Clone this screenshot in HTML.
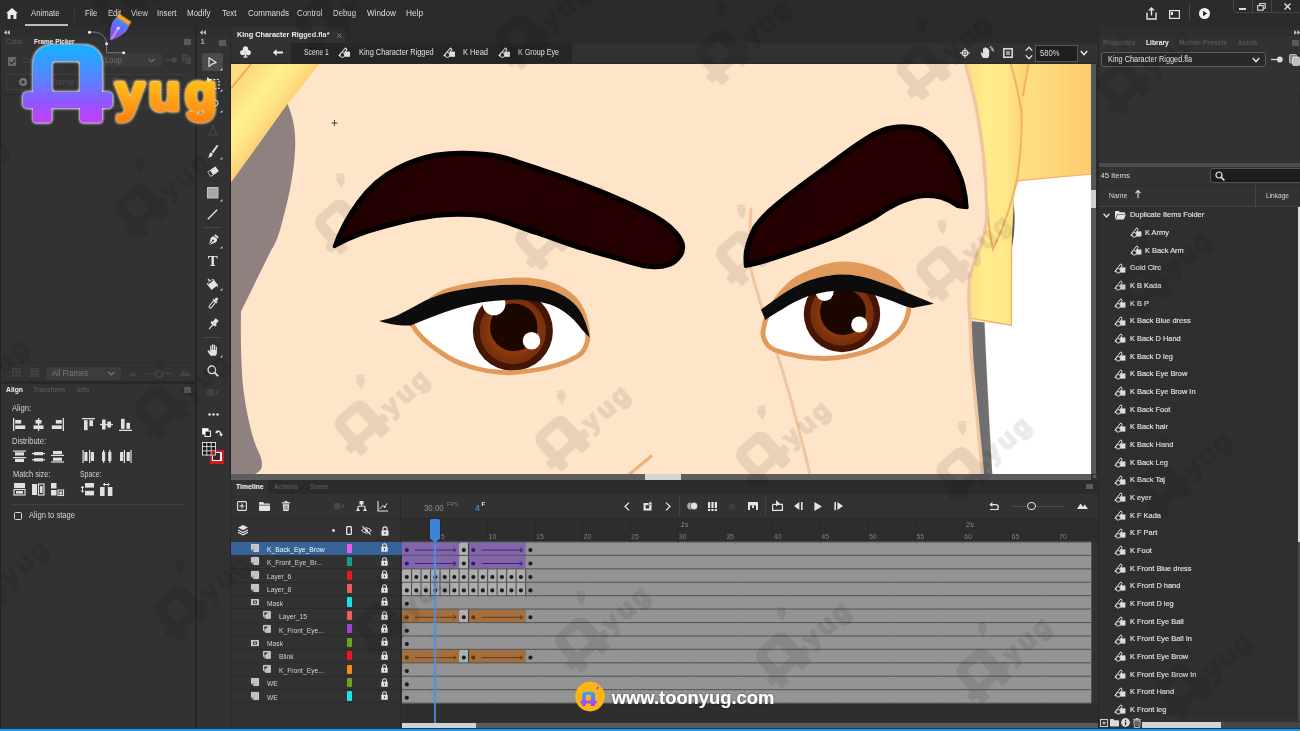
<!DOCTYPE html>
<html>
<head>
<meta charset="utf-8">
<title>Animate - King Character Rigged.fla</title>
<style>
*{box-sizing:border-box;margin:0;padding:0}
html,body{width:1300px;height:731px;overflow:hidden;background:#323232;font-family:"Liberation Sans",sans-serif;color:#d6d6d6;font-size:8px}
#root{position:relative;width:1300px;height:731px;overflow:hidden;background:#323232}
.abs{position:absolute}
.t{position:absolute;white-space:nowrap;line-height:10px;font-size:8px;color:#d4d4d4;transform-origin:0 50%}
.b{font-weight:bold;color:#f2f2f2}
.dim{color:#5e5e5e}
.blur{filter:blur(.35px)}
svg{position:absolute;overflow:visible}
#menubar{left:0;top:0;width:1300px;height:26px;background:#2b2b2b}
#menubar .t{top:8px;font-size:8.3px;color:#dedede}
</style>
</head>
<body>
<div id="root">

<!-- ================= MENUBAR ================= -->
<div id="menubar" class="abs blur">
<svg style="left:6px;top:8px" width="12" height="11" viewBox="0 0 12 11"><path d="M6 0 L12 5.2 L10.4 5.2 L10.4 11 L7.4 11 L7.4 7 L4.6 7 L4.6 11 L1.6 11 L1.6 5.2 L0 5.2 Z" fill="#ececec"/></svg>
<div class="t" style="transform:scaleX(0.940);left:31px">Animate</div>
<div class="abs" style="left:25px;top:24px;width:43px;height:2px;background:#bdbdbd"></div>
<div class="abs" style="left:74px;top:5px;width:1px;height:16px;background:#3a3a3a"></div>
<div class="t" style="transform:scaleX(0.920);left:85px">File</div>
<div class="t" style="transform:scaleX(0.923);left:108px">Edit</div>
<div class="t" style="transform:scaleX(0.942);left:131px">View</div>
<div class="t" style="transform:scaleX(0.939);left:157px">Insert</div>
<div class="t" style="transform:scaleX(0.962);left:187px">Modify</div>
<div class="t" style="transform:scaleX(0.940);left:222px">Text</div>
<div class="t" style="transform:scaleX(0.966);left:248px">Commands</div>
<div class="t" style="transform:scaleX(0.953);left:297px">Control</div>
<div class="t" style="transform:scaleX(0.941);left:333px">Debug</div>
<div class="t" style="transform:scaleX(0.983);left:367px">Window</div>
<div class="t" style="left:406px">Help</div>
<!-- right icons -->
<svg style="left:1146px;top:7px" width="11" height="13" viewBox="0 0 11 13"><path d="M1 5.5 V12 H10 V5.5" fill="none" stroke="#e6e6e6" stroke-width="1.4"/><path d="M5.5 8.5 V1.2 M3 3.4 L5.5 1 L8 3.4" fill="none" stroke="#e6e6e6" stroke-width="1.4"/></svg>
<svg style="left:1169px;top:10px" width="11" height="9" viewBox="0 0 11 9"><rect x=".6" y=".6" width="9.8" height="7.8" fill="none" stroke="#e6e6e6" stroke-width="1.2"/><rect x="1.8" y="2" width="2.2" height="3" fill="#e6e6e6"/></svg>
<div class="abs" style="left:1189px;top:4px;width:1px;height:16px;background:#4a4a4a"></div>
<svg style="left:1199px;top:8px" width="11" height="11" viewBox="0 0 11 11"><circle cx="5.5" cy="5.5" r="5.5" fill="#f2f2f2"/><path d="M4 2.8 L8.2 5.5 L4 8.2 Z" fill="#2b2b2b"/></svg>
<div class="abs" style="left:1233px;top:-2px;width:70px;height:15px;border:1px solid #474747;border-radius:0 0 0 4px"></div>
<div class="abs" style="left:1252px;top:0;width:1px;height:12px;background:#474747"></div>
<div class="abs" style="left:1271px;top:0;width:1px;height:12px;background:#474747"></div>
<div class="abs" style="left:1239px;top:8px;width:7px;height:2px;background:#dcdcdc"></div>
<svg style="left:1257px;top:3px" width="9" height="8" viewBox="0 0 9 8"><rect x="2.6" y=".6" width="5.6" height="4.6" fill="none" stroke="#dcdcdc" stroke-width="1.1"/><rect x=".6" y="2.6" width="5.6" height="4.6" fill="#2b2b2b" stroke="#dcdcdc" stroke-width="1.1"/></svg>
<svg style="left:1284px;top:3px" width="7" height="7" viewBox="0 0 7 7"><path d="M.5 .5 L6.5 6.5 M6.5 .5 L.5 6.5" stroke="#e6e6e6" stroke-width="1.3"/></svg>
</div>

<!-- ================= LEFT PANELS ================= -->
<div class="abs" style="left:0;top:26px;width:196px;height:705px;background:#323232"></div>
<div class="abs" style="left:0;top:26px;width:1px;height:705px;background:#242424"></div>
<div class="abs blur" id="framepicker" style="left:0;top:26px;width:196px;height:356px">
  <div class="abs" style="left:0;top:0;width:196px;height:11px;background:#2e2e2e"></div>
  <svg style="left:4px;top:4px" width="6" height="5" viewBox="0 0 6 5"><path d="M2.6 0 L0 2.5 L2.6 5 Z M5.8 0 L3.2 2.5 L5.8 5 Z" fill="#d0d0d0"/></svg>
  <div class="t dim" style="transform:scaleX(0.863);left:5.5px;top:11px">Color</div>
  <div class="t b" style="transform:scaleX(0.851);left:34px;top:11px;font-size:7.6px">Frame Picker</div>
  <div class="abs" style="left:184px;top:13px;width:7px;height:6px;background:#5a5a5a"></div>
  <!-- row1 -->
  <div class="abs" style="left:7.5px;top:31px;width:8.5px;height:8.5px;background:#6b6b6b;border-radius:1px"></div>
  <svg style="left:8.5px;top:32.5px" width="7" height="6" viewBox="0 0 7 6"><path d="M.8 3 L2.7 4.9 L6.3 .8" stroke="#2e2e2e" stroke-width="1.3" fill="none"/></svg>
  <div class="t" style="left:23px;top:30px;color:#4e4e4e">Create Graphic Sy...</div>
  <div class="abs" style="left:102px;top:27px;width:60px;height:14px;background:#3b3b3b;border-radius:3px"></div>
  <div class="t" style="transform:scaleX(0.898);left:105px;top:29px;color:#727272;font-size:8.5px">Loop</div>
  <svg style="left:148px;top:32px" width="7" height="5" viewBox="0 0 7 5"><path d="M.5 .8 L3.5 4 L6.5 .8" stroke="#727272" stroke-width="1.1" fill="none"/></svg>
  <svg style="left:166px;top:31px" width="11" height="6" viewBox="0 0 11 6"><path d="M0 3 H6" stroke="#4a4a4a" stroke-width="1.2"/><circle cx="8" cy="3" r="2.6" fill="#4a4a4a"/></svg>
  <svg style="left:182px;top:28px" width="10" height="11" viewBox="0 0 10 11"><rect x="0" y="0" width="6.5" height="8" rx="1" fill="#444"/><rect x="3" y="2.5" width="6.5" height="8" rx="1" fill="#444" stroke="#323232" stroke-width=".8"/></svg>
  <!-- row2 -->
  <div class="abs" style="left:6px;top:48px;width:182px;height:16px;border:1px solid #3d3d3d;border-radius:2px"></div>
  <svg style="left:18.5px;top:52px" width="8" height="8" viewBox="0 0 8 8"><circle cx="4" cy="4" r="2.9" fill="none" stroke="#7a7a7a" stroke-width="2.1"/></svg>
  <div class="t" style="left:50px;top:51px;color:#4c4c4c;font-size:8.5px">Frame</div>
  <svg style="left:112px;top:51px" width="8" height="8" viewBox="0 0 8 8"><circle cx="3.2" cy="3.2" r="2.5" fill="none" stroke="#4c4c4c" stroke-width="1"/><path d="M5 5 L7.6 7.6" stroke="#4c4c4c" stroke-width="1.1"/></svg>
  <div class="t" style="left:123px;top:51px;color:#474747;font-size:8.5px">Last frame</div>
  <div class="abs" style="left:0;top:67.5px;width:196px;height:1px;background:#2b2b2b"></div>
  <div class="t" style="left:40px;top:76px;color:#454545">Select a Graphic Symbol to pick frames</div>
  <!-- bottom row -->
  <div class="abs" style="left:0;top:336px;width:196px;height:1px;background:#2c2c2c"></div>
  <svg style="left:11.5px;top:342px" width="9" height="9" viewBox="0 0 9 9"><g fill="#464646"><rect x="0" y="0" width="2.2" height="2.2"/><rect x="3.3" y="0" width="2.2" height="2.2"/><rect x="6.6" y="0" width="2.2" height="2.2"/><rect x="0" y="3.3" width="2.2" height="2.2"/><rect x="3.3" y="3.3" width="2.2" height="2.2"/><rect x="6.6" y="3.3" width="2.2" height="2.2"/><rect x="0" y="6.6" width="2.2" height="2.2"/><rect x="3.3" y="6.6" width="2.2" height="2.2"/><rect x="6.6" y="6.6" width="2.2" height="2.2"/></g></svg>
  <svg style="left:30px;top:342px" width="9" height="9" viewBox="0 0 9 9"><g fill="#464646"><rect x="0" y=".3" width="9" height="1.4"/><rect x="0" y="2.7" width="9" height="1.4"/><rect x="0" y="5.1" width="9" height="1.4"/><rect x="0" y="7.5" width="9" height="1.4"/></g></svg>
  <div class="abs" style="left:46px;top:340.5px;width:75px;height:13px;background:#3c3c3c;border-radius:3px"></div>
  <div class="t" style="transform:scaleX(0.886);left:52px;top:342px;color:#7c7c7c;font-size:8.5px">All Frames</div>
  <svg style="left:107.5px;top:344.5px" width="7" height="5" viewBox="0 0 7 5"><path d="M.5 .8 L3.5 4 L6.5 .8" stroke="#7c7c7c" stroke-width="1.1" fill="none"/></svg>
  <svg style="left:129px;top:345px" width="8" height="5" viewBox="0 0 8 5"><path d="M0 5 L4 1 L8 5 Z" fill="#444"/></svg>
  <div class="abs" style="left:146px;top:347px;width:26px;height:1px;background:#444"></div>
  <div class="abs" style="left:155px;top:343.5px;width:8px;height:8px;border:1.3px solid #505050;border-radius:50%;background:#323232"></div>
  <svg style="left:179px;top:343px" width="12" height="7" viewBox="0 0 12 7"><path d="M0 7 L4 1 L7 5 L9 2.5 L12 7 Z" fill="#444"/></svg>
</div>
<div class="abs" style="left:0;top:381px;width:196px;height:3px;background:#282828"></div>
<div class="abs blur" id="alignpanel" style="left:0;top:0;width:196px;height:731px">
  <div class="t b" style="transform:scaleX(0.890);left:5.5px;top:384.5px;font-size:7.6px">Align</div>
  <div class="t dim" style="transform:scaleX(0.885);left:33px;top:384.5px;font-weight:bold;font-size:7.4px;color:#555">Transform</div>
  <div class="t dim" style="transform:scaleX(0.923);left:76.5px;top:384.5px;font-weight:bold;font-size:7.4px;color:#555">Info</div>
  <div class="abs" style="left:184px;top:386.5px;width:7px;height:6px;background:#5a5a5a"></div>
  <div class="t" style="transform:scaleX(0.928);left:12px;top:403.5px;font-size:8.2px">Align:</div>
  <div class="t" style="transform:scaleX(0.922);left:12px;top:437px;font-size:8.2px">Distribute:</div>
  <div class="t" style="transform:scaleX(0.906);left:12.5px;top:470px;font-size:8.2px">Match size:</div>
  <div class="t" style="transform:scaleX(0.843);left:79.5px;top:470px;font-size:8.2px">Space:</div>
  <svg style="left:13px;top:417.5px" width="13" height="13" viewBox="0 0 13 13"><rect x="0" y="0" width="1.3" height="13" fill="#e0e0e0"/><rect x="2.2" y="2" width="6" height="3.6" fill="#e0e0e0"/><rect x="2.2" y="7.4" width="10" height="3.6" fill="#e0e0e0"/></svg>
<svg style="left:32px;top:417.5px" width="13" height="13" viewBox="0 0 13 13"><rect x="5.9" y="0" width="1.3" height="13" fill="#e0e0e0"/><rect x="3.5" y="2" width="6" height="3.6" fill="#e0e0e0"/><rect x="1.5" y="7.4" width="10" height="3.6" fill="#e0e0e0"/></svg>
<svg style="left:51px;top:417.5px" width="13" height="13" viewBox="0 0 13 13"><rect x="11.7" y="0" width="1.3" height="13" fill="#e0e0e0"/><rect x="4.8" y="2" width="6" height="3.6" fill="#e0e0e0"/><rect x=".8" y="7.4" width="10" height="3.6" fill="#e0e0e0"/></svg>
<svg style="left:81.5px;top:417.5px" width="13" height="13" viewBox="0 0 13 13"><rect x="0" y="0" width="13" height="1.3" fill="#e0e0e0"/><rect x="2" y="2.2" width="3.6" height="10" fill="#e0e0e0"/><rect x="7.4" y="2.2" width="3.6" height="6" fill="#e0e0e0"/></svg>
<svg style="left:100px;top:417.5px" width="13" height="13" viewBox="0 0 13 13"><rect x="0" y="5.9" width="13" height="1.3" fill="#e0e0e0"/><rect x="2" y="1.5" width="3.6" height="10" fill="#e0e0e0"/><rect x="7.4" y="3.5" width="3.6" height="6" fill="#e0e0e0"/></svg>
<svg style="left:118.5px;top:417.5px" width="13" height="13" viewBox="0 0 13 13"><rect x="0" y="11.7" width="13" height="1.3" fill="#e0e0e0"/><rect x="2" y=".8" width="3.6" height="10" fill="#e0e0e0"/><rect x="7.4" y="4.8" width="3.6" height="6" fill="#e0e0e0"/></svg>
<svg style="left:13px;top:450px" width="13" height="13" viewBox="0 0 13 13"><rect x="0" y=".5" width="13" height="1.2" fill="#e0e0e0"/><rect x="2" y="2.3" width="9" height="3.2" fill="#e0e0e0"/><rect x="0" y="7" width="13" height="1.2" fill="#e0e0e0"/><rect x="2" y="8.8" width="9" height="3.2" fill="#e0e0e0"/></svg>
<svg style="left:32px;top:450px" width="13" height="13" viewBox="0 0 13 13"><rect x="0" y="3" width="13" height="1.2" fill="#e0e0e0"/><rect x="2" y="2" width="9" height="3.2" fill="#e0e0e0"/><rect x="0" y="9.2" width="13" height="1.2" fill="#e0e0e0"/><rect x="2" y="8.2" width="9" height="3.2" fill="#e0e0e0"/></svg>
<svg style="left:51px;top:450px" width="13" height="13" viewBox="0 0 13 13"><rect x="0" y="4.8" width="13" height="1.2" fill="#e0e0e0"/><rect x="2" y="1" width="9" height="3.2" fill="#e0e0e0"/><rect x="0" y="11.4" width="13" height="1.2" fill="#e0e0e0"/><rect x="2" y="7.6" width="9" height="3.2" fill="#e0e0e0"/></svg>
<svg style="left:81.5px;top:450px" width="13" height="13" viewBox="0 0 13 13"><rect x=".5" y="0" width="1.2" height="13" fill="#e0e0e0"/><rect x="2.3" y="2" width="3.2" height="9" fill="#e0e0e0"/><rect x="7" y="0" width="1.2" height="13" fill="#e0e0e0"/><rect x="8.8" y="2" width="3.2" height="9" fill="#e0e0e0"/></svg>
<svg style="left:100px;top:450px" width="13" height="13" viewBox="0 0 13 13"><rect x="3" y="0" width="1.2" height="13" fill="#e0e0e0"/><rect x="2" y="2" width="3.2" height="9" fill="#e0e0e0"/><rect x="9.2" y="0" width="1.2" height="13" fill="#e0e0e0"/><rect x="8.2" y="2" width="3.2" height="9" fill="#e0e0e0"/></svg>
<svg style="left:118.5px;top:450px" width="13" height="13" viewBox="0 0 13 13"><rect x="4.8" y="0" width="1.2" height="13" fill="#e0e0e0"/><rect x="1" y="2" width="3.2" height="9" fill="#e0e0e0"/><rect x="11.4" y="0" width="1.2" height="13" fill="#e0e0e0"/><rect x="7.6" y="2" width="3.2" height="9" fill="#e0e0e0"/></svg>
<svg style="left:13px;top:483px" width="13" height="13" viewBox="0 0 13 13"><rect x="1" y="0" width="11" height="5" fill="#e0e0e0"/><rect x="1" y="6.5" width="11" height="5.5" fill="none" stroke="#e0e0e0" stroke-width="1.2"/><rect x="3" y="8" width="7" height="2.6" fill="#e0e0e0"/></svg>
<svg style="left:32px;top:483px" width="13" height="13" viewBox="0 0 13 13"><rect x="0" y="1" width="5" height="11" fill="#e0e0e0"/><rect x="6.5" y="1" width="5.5" height="11" fill="none" stroke="#e0e0e0" stroke-width="1.2"/><rect x="8" y="3" width="2.6" height="7" fill="#e0e0e0"/></svg>
<svg style="left:51px;top:483px" width="13" height="13" viewBox="0 0 13 13"><rect x="0" y="0" width="5.5" height="5.5" fill="#e0e0e0"/><rect x="0" y="7" width="5.5" height="5.5" fill="#e0e0e0"/><rect x="7" y="7" width="5.5" height="5.5" fill="none" stroke="#e0e0e0" stroke-width="1.1"/><rect x="8.4" y="8.6" width="2.8" height="2.8" fill="#e0e0e0"/></svg>
<svg style="left:81px;top:483px" width="13" height="13" viewBox="0 0 13 13"><rect x="4" y="0" width="9" height="4.6" fill="#e0e0e0"/><rect x="4" y="7.8" width="9" height="4.6" fill="#e0e0e0"/><path d="M1.5 3.5 V9 M0 5 L1.5 3.2 L3 5 M0 7.6 L1.5 9.4 L3 7.6" stroke="#e0e0e0" fill="none" stroke-width="1"/></svg>
<svg style="left:100px;top:483px" width="13" height="13" viewBox="0 0 13 13"><rect x="0" y="4" width="4.6" height="9" fill="#e0e0e0"/><rect x="7.8" y="4" width="4.6" height="9" fill="#e0e0e0"/><path d="M3.5 1.5 H9 M5 0 L3.2 1.5 L5 3 M7.6 0 L9.4 1.5 L7.6 3" stroke="#e0e0e0" fill="none" stroke-width="1"/></svg>
  <div class="abs" style="left:12px;top:503.5px;width:172px;height:1px;background:#434343"></div>
  <div class="abs" style="left:13.5px;top:511.5px;width:8.5px;height:8.5px;border:1.2px solid #d8d8d8;border-radius:1.5px"></div>
  <div class="t" style="transform:scaleX(0.927);left:28.5px;top:510.5px;font-size:8.2px">Align to stage</div>
</div>
<div class="abs" style="left:195px;top:26px;width:2px;height:705px;background:#262626"></div>

<!-- ================= TOOLS ================= -->
<div class="abs blur" id="tools" style="left:0;top:0;width:231px;height:731px">
<div class="abs" style="left:197px;top:26px;width:33px;height:705px;background:#323232"></div>
<div class="abs" style="left:197px;top:26px;width:33px;height:11px;background:#2e2e2e"></div>
<svg style="left:199.7px;top:30px" width="6" height="5" viewBox="0 0 6 5"><path d="M2.6 0 L0 2.5 L2.6 5 Z M5.8 0 L3.2 2.5 L5.8 5 Z" fill="#d0d0d0"/></svg>
<div class="t" style="left:200.6px;top:37px;font-size:8px;color:#dcdcdc">1</div>
<div class="abs" style="left:219px;top:39.5px;width:7px;height:6px;background:#5a5a5a"></div>
<div class="abs" style="left:202px;top:52.5px;width:21px;height:18px;background:#4b4b4b;border-radius:2.5px"></div>
<svg style="left:208.0px;top:56.8px" width="9" height="11" viewBox="0 0 9 11"><path d="M1 .8 L1 9.6 L3.6 7.4 L8.2 5.4 Z" fill="none" stroke="#e4e4e4" stroke-width="1.2" stroke-linejoin="round"/></svg>
<svg style="left:220px;top:68px" width="2.4" height="2.4" viewBox="0 0 3 3"><path d="M3 0 V3 H0 Z" fill="#cfcfcf"/></svg>
<svg style="left:206.5px;top:76.5px" width="13" height="13" viewBox="0 0 13 13"><rect x="3" y="2.5" width="9" height="9" fill="none" stroke="#e4e4e4" stroke-width="1.2" stroke-dasharray="2 1.4"/><path d="M0 0 L0 6 L1.8 4.6 L4.8 3.2 Z" fill="#e4e4e4"/></svg>
<svg style="left:220px;top:89px" width="2.4" height="2.4" viewBox="0 0 3 3"><path d="M3 0 V3 H0 Z" fill="#cfcfcf"/></svg>
<svg style="left:208.0px;top:99.0px" width="11" height="10" viewBox="0 0 11 10"><ellipse cx="5.5" cy="4" rx="4.6" ry="3.2" fill="none" stroke="#e4e4e4" stroke-width="1.1"/><path d="M3 7 Q2 9 3.5 10" fill="none" stroke="#e4e4e4" stroke-width="1"/></svg>
<svg style="left:220px;top:110px" width="2.4" height="2.4" viewBox="0 0 3 3"><path d="M3 0 V3 H0 Z" fill="#cfcfcf"/></svg>
<svg style="left:207.5px;top:124.5px" width="10" height="11" viewBox="0 0 10 11"><path d="M1 10 L5 1 L9 10 Z" fill="none" stroke="#464646" stroke-width="1.2"/></svg>
<svg style="left:206.5px;top:144.5px" width="12" height="13" viewBox="0 0 12 13"><path d="M11.5 .5 L6.2 8.2 L4.6 7 L9.8 0 Z" fill="#e4e4e4"/><path d="M4 7.6 L5.8 9 Q5.4 12 1 12.6 Q2.6 10.6 2.4 9 Q2.8 7.8 4 7.6 Z" fill="#e4e4e4"/></svg>
<svg style="left:220px;top:157px" width="2.4" height="2.4" viewBox="0 0 3 3"><path d="M3 0 V3 H0 Z" fill="#cfcfcf"/></svg>
<svg style="left:206.5px;top:166.0px" width="12" height="11" viewBox="0 0 12 11"><g transform="rotate(-35 6 5.5)"><rect x="1" y="2.6" width="10" height="6" rx=".8" fill="#e4e4e4"/><rect x="1.6" y="3.2" width="2.6" height="4.8" fill="#323232"/></g></svg>
<svg style="left:206.6px;top:186.8px" width="11.5" height="11.5" viewBox="0 0 11.5 11.5"><rect x=".6" y=".6" width="10.3" height="10.3" fill="#a6a6a6" stroke="#c9c9c9" stroke-width="1.1"/></svg>
<svg style="left:220px;top:199px" width="2.4" height="2.4" viewBox="0 0 3 3"><path d="M3 0 V3 H0 Z" fill="#cfcfcf"/></svg>
<svg style="left:207.0px;top:208.5px" width="11" height="11" viewBox="0 0 11 11"><path d="M.8 10.2 L10.2 .8" stroke="#e4e4e4" stroke-width="1.3"/></svg>
<div class="abs" style="left:204px;top:226.5px;width:17px;height:1px;background:#484848"></div>
<svg style="left:206.5px;top:233.5px" width="12" height="13" viewBox="0 0 12 13"><g transform="rotate(40 6 6.5)"><path d="M6 12.5 L2.6 6 Q2.6 3.6 4 2.6 L8 2.6 Q9.4 3.6 9.4 6 Z" fill="#e4e4e4"/><rect x="3.8" y=".2" width="4.4" height="1.7" fill="#e4e4e4"/><path d="M6 12 V7.4" stroke="#323232" stroke-width=".9"/><circle cx="6" cy="6.6" r="1" fill="#323232"/></g></svg>
<svg style="left:220px;top:246px" width="2.4" height="2.4" viewBox="0 0 3 3"><path d="M3 0 V3 H0 Z" fill="#cfcfcf"/></svg>
<div class="t" style="left:207.8px;top:254.2px;font-family:'Liberation Serif',serif;font-weight:bold;font-size:15px;line-height:15px;color:#e4e4e4">T</div>
<svg style="left:205.5px;top:276.5px" width="13" height="13" viewBox="0 0 13 13"><g transform="rotate(-38 6 7)"><rect x="2" y="4.4" width="8" height="7" fill="#e4e4e4"/><path d="M6 4 V.6" stroke="#e4e4e4" stroke-width="1.2"/><ellipse cx="6" cy="4.4" rx="4" ry="1.1" fill="#323232" stroke="#e4e4e4" stroke-width=".7"/></g><path d="M11.4 7.2 Q12.8 9.6 11.4 10.6 Q10 9.6 11.4 7.2 Z" fill="#e4e4e4"/></svg>
<svg style="left:220px;top:288px" width="2.4" height="2.4" viewBox="0 0 3 3"><path d="M3 0 V3 H0 Z" fill="#cfcfcf"/></svg>
<svg style="left:206.5px;top:297.0px" width="12" height="13" viewBox="0 0 12 13"><g transform="rotate(40 6 6.5)"><rect x="4.7" y="4" width="2.6" height="8" rx="1.2" fill="none" stroke="#e4e4e4" stroke-width="1"/><rect x="3.4" y="2.6" width="5.2" height="1.6" fill="#e4e4e4"/><rect x="4.6" y="-.6" width="2.8" height="3.4" rx="1.2" fill="#e4e4e4"/></g></svg>
<svg style="left:206.5px;top:318.0px" width="12" height="13" viewBox="0 0 12 13"><g transform="rotate(40 6 6.5)"><rect x="4" y="0" width="4" height="4.6" fill="#e4e4e4"/><path d="M2.4 4.6 H9.6 L8.6 7 H3.4 Z" fill="#e4e4e4"/><path d="M6 7 V12.6" stroke="#e4e4e4" stroke-width="1.1"/></g></svg>
<div class="abs" style="left:204px;top:337px;width:17px;height:1px;background:#484848"></div>
<svg style="left:206.6px;top:344.0px" width="12" height="12" viewBox="0 0 12 12"><path d="M3.6 11.8 Q1.6 9.2 .4 6.8 Q1 5.6 2.2 6.6 L3.2 8 V2.4 Q3.2 1.6 3.9 1.6 Q4.6 1.6 4.6 2.4 V5.8 H5 V1 Q5 .2 5.7 .2 Q6.4 .2 6.4 1 V5.8 H6.8 V1.6 Q6.8 .8 7.5 .8 Q8.2 .8 8.2 1.6 V6.2 H8.6 V3.2 Q8.6 2.5 9.2 2.5 Q9.9 2.5 9.9 3.2 V8.4 Q9.9 10.6 8.6 11.8 Z" fill="#e4e4e4"/><path d="M4.8 2.6 V5.6 M6.6 2 V5.6 M8.4 3.4 V6" stroke="#323232" stroke-width=".45"/></svg>
<svg style="left:220px;top:355px" width="2.4" height="2.4" viewBox="0 0 3 3"><path d="M3 0 V3 H0 Z" fill="#cfcfcf"/></svg>
<svg style="left:206.5px;top:365.0px" width="12" height="12" viewBox="0 0 12 12"><circle cx="4.8" cy="4.8" r="3.8" fill="none" stroke="#e4e4e4" stroke-width="1.3"/><path d="M7.6 7.6 L11.2 11.2" stroke="#e4e4e4" stroke-width="1.7"/></svg>
<svg style="left:207.0px;top:388.5px" width="11" height="7" viewBox="0 0 11 7"><rect x="0" y="0" width="7" height="7" rx="1" fill="#414141"/><path d="M7.6 3.5 L11 .6 V6.4 Z" fill="#414141"/></svg>
<svg style="left:207.5px;top:412.5px" width="11" height="3" viewBox="0 0 11 3"><circle cx="1.5" cy="1.5" r="1.25" fill="#e4e4e4"/><circle cx="5.5" cy="1.5" r="1.25" fill="#e4e4e4"/><circle cx="9.5" cy="1.5" r="1.25" fill="#e4e4e4"/></svg>
<svg style="left:201.5px;top:428.0px" width="9" height="9" viewBox="0 0 9 9"><rect x=".5" y=".5" width="5.6" height="5.6" fill="#fff" stroke="#fff" stroke-width=".6"/><rect x="3" y="3" width="5.4" height="5.4" fill="#1c1c1c" stroke="#fff" stroke-width="1"/></svg>
<svg style="left:214.5px;top:429.0px" width="8" height="8" viewBox="0 0 8 8"><path d="M1 3.2 Q5.6 .4 6.2 6.4" fill="none" stroke="#e4e4e4" stroke-width="1.4"/><path d="M4.2 5.2 L6.3 7.8 L8 4.8 Z" fill="#e4e4e4"/><path d="M0 3.6 L2.8 1 L2.6 4.6 Z" fill="#e4e4e4"/></svg>
<div class="abs" style="left:209.5px;top:449.5px;width:14.5px;height:14px;background:#d01a22"></div><div class="abs" style="left:211.8px;top:451.8px;width:10px;height:9.5px;background:#f4f4f4"></div><div class="abs" style="left:213.2px;top:453.2px;width:7.2px;height:6.8px;background:#2c2c2c"></div>
<svg style="left:202px;top:442px" width="14" height="13.5" viewBox="0 0 14 13.5"><rect x="0" y="0" width="14" height="13.5" fill="#171717"/><g stroke="#e8e8e8" stroke-width=".9" fill="none"><rect x=".45" y=".45" width="13.1" height="12.6"/><path d="M4.8 0 V13.5 M9.2 0 V13.5 M0 4.6 H14 M0 8.9 H14"/></g><rect x="9.6" y="9.3" width="3.6" height="3.4" fill="#d01a22"/></svg>
</div>
<div class="abs" style="left:229.5px;top:26px;width:1.5px;height:705px;background:#262626"></div>

<!-- ================= DOCUMENT BAR ================= -->
<div class="abs blur" id="docbar" style="left:0;top:0;width:1300px;height:64px">
<div class="abs" style="left:231px;top:26px;width:867px;height:17px;background:#2b2b2b"></div>
<div class="abs" style="left:231px;top:27px;width:114px;height:16px;background:#323232"></div>
<div class="t b" style="transform:scaleX(0.950);left:237px;top:30px;font-size:7.7px">King Character Rigged.fla*</div>
<svg style="left:337px;top:33px" width="5" height="5" viewBox="0 0 5 5"><path d="M.4 .4 L4.6 4.6 M4.6 .4 L.4 4.6" stroke="#8c8c8c" stroke-width=".9"/></svg>
<div class="abs" style="left:231px;top:43px;width:867px;height:21px;background:#313131"></div>
<div class="abs" style="left:291px;top:43px;width:281px;height:20px;background:#262626"></div>
<!-- club / scene icon -->
<svg style="left:240px;top:46px" width="11" height="12" viewBox="0 0 11 12"><circle cx="5.5" cy="3" r="2.7" fill="#e6e6e6"/><circle cx="2.8" cy="6.6" r="2.7" fill="#e6e6e6"/><circle cx="8.2" cy="6.6" r="2.7" fill="#e6e6e6"/><path d="M5.5 6 L4.2 11 H6.8 Z" fill="#e6e6e6"/><rect x="3.4" y="10.6" width="4.2" height="1" fill="#e6e6e6"/></svg>
<svg style="left:273px;top:48.5px" width="10" height="7" viewBox="0 0 10 7"><path d="M3.6 0 L0 3.5 L3.6 7 V4.4 H10 V2.6 H3.6 Z" fill="#ececec"/></svg>
<div class="t" style="transform:scaleX(0.814);left:303.5px;top:47px;font-size:8.3px;color:#e0e0e0">Scene 1</div>
<svg style="left:337.5px;top:47px" width="13" height="11" viewBox="0 0 13 11"><path d="M1 8.6 L7.4 1 L8.8 2.4 L5.6 8.6 Z" fill="none" stroke="#e0e0e0" stroke-width="1.1" stroke-linejoin="round"/><rect x="6.6" y="4.6" width="5.4" height="5.2" fill="#e0e0e0"/><circle cx="4.4" cy="8" r="2.4" fill="#262626" stroke="#e0e0e0" stroke-width="1"/></svg>
<div class="t" style="transform:scaleX(0.889);left:358.5px;top:47px;font-size:8.3px;color:#e0e0e0">King Character Rigged</div>
<svg style="left:443px;top:47px" width="13" height="11" viewBox="0 0 13 11"><path d="M1 8.6 L7.4 1 L8.8 2.4 L5.6 8.6 Z" fill="none" stroke="#e0e0e0" stroke-width="1.1" stroke-linejoin="round"/><rect x="6.6" y="4.6" width="5.4" height="5.2" fill="#e0e0e0"/><circle cx="4.4" cy="8" r="2.4" fill="#262626" stroke="#e0e0e0" stroke-width="1"/></svg>
<div class="t" style="transform:scaleX(0.903);left:463px;top:47px;font-size:8.3px;color:#e0e0e0">K Head</div>
<svg style="left:498px;top:47px" width="13" height="11" viewBox="0 0 13 11"><path d="M1 8.6 L7.4 1 L8.8 2.4 L5.6 8.6 Z" fill="none" stroke="#e0e0e0" stroke-width="1.1" stroke-linejoin="round"/><rect x="6.6" y="4.6" width="5.4" height="5.2" fill="#e0e0e0"/><circle cx="4.4" cy="8" r="2.4" fill="#262626" stroke="#e0e0e0" stroke-width="1"/></svg>
<div class="t" style="transform:scaleX(0.863);left:518px;top:47px;font-size:8.3px;color:#e0e0e0">K Group Eye</div>
<!-- right side controls -->
<svg style="left:960px;top:47.5px" width="10" height="10" viewBox="0 0 10 10"><circle cx="5" cy="5" r="2.8" fill="none" stroke="#e0e0e0" stroke-width="1.1"/><path d="M5 0 V10 M0 5 H10" stroke="#e0e0e0" stroke-width="1"/></svg>
<svg style="left:980px;top:46px" width="13" height="13" viewBox="0 0 13 13"><path d="M3 12 Q1 9 .6 6.6 Q1.4 5.6 2.4 6.8 L3 8 V2.6 Q3.8 1.8 4.6 2.6 V6 V1.6 Q5.4 .8 6.2 1.6 V6 V2.2 Q7 1.4 7.8 2.2 V6.4 V3.6 Q8.6 3 9.2 3.8 V8.6 Q9.2 10.8 8 12 Z" fill="#e0e0e0"/><path d="M9.6 1 Q12.4 2 12.4 5 M10.4 0 Q13.6 1.6 13.4 5.6" fill="none" stroke="#e0e0e0" stroke-width=".8"/></svg>
<svg style="left:1003px;top:47.5px" width="10" height="10" viewBox="0 0 10 10"><rect x=".8" y=".8" width="8.4" height="8.4" fill="none" stroke="#d8d8d8" stroke-width="1.6"/><rect x="3" y="3" width="4" height="4" fill="#9a9a9a"/></svg>
<svg style="left:1024.5px;top:45.5px" width="8" height="14" viewBox="0 0 8 14"><path d="M.8 4.6 L4 1.2 L7.2 4.6 M.8 9.4 L4 12.8 L7.2 9.4" fill="none" stroke="#e0e0e0" stroke-width="1.3"/></svg>
<div class="abs" style="left:1035px;top:44.5px;width:43px;height:17px;background:#1f1f1f;border:1px solid #555"></div>
<div class="t" style="transform:scaleX(0.918);left:1040px;top:48px;font-size:8.3px;color:#dcdcdc">580%</div>
<svg style="left:1080px;top:50px" width="8" height="6" viewBox="0 0 8 6"><path d="M.8 1 L4 4.6 L7.2 1" fill="none" stroke="#ececec" stroke-width="1.4"/></svg>
</div>

<!-- ================= STAGE ================= -->
<div class="abs" style="left:230.5px;top:63px;width:868px;height:418px;background:#2a2a2a"></div>
<svg id="stage" style="left:231px;top:63.5px;filter:blur(.3px)" width="860" height="410.5" viewBox="231 63.5 860 410.5">
<defs>
<clipPath id="stageclip"><rect x="231" y="63.5" width="860" height="410.5"/></clipPath>
<linearGradient id="hairL" gradientUnits="userSpaceOnUse" x1="236" y1="92" x2="290" y2="133">
  <stop offset="0" stop-color="#fddc80"/><stop offset=".3" stop-color="#fff08e"/><stop offset=".55" stop-color="#fee384"/><stop offset=".8" stop-color="#fbc96e"/><stop offset="1" stop-color="#f7b25c"/>
</linearGradient>
<linearGradient id="hairR1" gradientUnits="userSpaceOnUse" x1="968" y1="0" x2="1022" y2="0">
  <stop offset="0" stop-color="#fcdc82"/><stop offset=".3" stop-color="#ffec8c"/><stop offset=".7" stop-color="#ffe888"/><stop offset="1" stop-color="#fbd676"/>
</linearGradient>
<linearGradient id="hairR2" gradientUnits="userSpaceOnUse" x1="1015" y1="0" x2="1091" y2="0">
  <stop offset="0" stop-color="#fee083"/><stop offset=".5" stop-color="#fdd87a"/><stop offset="1" stop-color="#fbca6e"/>
</linearGradient>
<linearGradient id="hairR3" gradientUnits="userSpaceOnUse" x1="968" y1="0" x2="1012" y2="0">
  <stop offset="0" stop-color="#fdea8c"/><stop offset=".6" stop-color="#fde582"/><stop offset="1" stop-color="#fbd474"/>
</linearGradient>
<radialGradient id="irisL" gradientUnits="userSpaceOnUse" cx="512.9" cy="330.4" r="40">
  <stop offset="0" stop-color="#5a1e08"/><stop offset=".58" stop-color="#8a3a0e"/><stop offset=".7" stop-color="#7c320c"/><stop offset=".82" stop-color="#75300c"/><stop offset=".835" stop-color="#461506"/><stop offset="1" stop-color="#431405"/>
</radialGradient>
<radialGradient id="irisR" gradientUnits="userSpaceOnUse" cx="842" cy="313.5" r="38.2">
  <stop offset="0" stop-color="#5a1e08"/><stop offset=".58" stop-color="#8a3a0e"/><stop offset=".7" stop-color="#7c320c"/><stop offset=".82" stop-color="#75300c"/><stop offset=".835" stop-color="#461506"/><stop offset="1" stop-color="#431405"/>
</radialGradient>
<clipPath id="eyeLclip"><path d="M411.5 323.2 C420 306 436 293 451 289 C470 284 495 280.5 517.7 279.5 C545 279 562 287 573 297 C582 306 587.5 320 587.8 338.8 C586 348 582 353 578 355.5 C562 365 540 370.5 508.5 372.3 C480 371.5 455 363 441 352 C428 344 418 335 411.5 323.2 Z"/></clipPath>
<clipPath id="eyeRclip"><path d="M762.8 333 C764 322 766 316 770.5 309 C778 294 790 281 803 275 C816 268.6 830 264 841.5 263.5 C860 263.5 878 269 892 278.8 C902 287 908 297 909 307.5 C908 318 904 325 899 331 C890 340 878 347 866 351 C852 355.5 838 357.6 824.6 358 C806 357.6 790 355 776 350 C768 347 764 342 762.8 333 Z"/></clipPath>
<clipPath id="belowLashL"><path d="M370 321 L379.2 320.4 C386 319 392 317.5 397.7 314.8 C407 310 416 305 425.4 300 C434 296 443 293 453 290.8 C465 288.2 478 286.3 490 285.3 C503 284.3 515 284 527 284.4 C537 285.3 546 287.3 554.6 290.8 C562 294 568 297.5 573 302 C578 306.5 581.5 312 584 318.5 C586.7 325 588.7 331 589.7 337 L600 337 L600 400 L370 400 Z"/></clipPath>
<clipPath id="belowLashR"><path d="M750 312 L761 309 C768 304 775 299 782 294 C790 288.5 799 284 807.7 280.5 C816 277.5 824 275.5 833 274.5 C842 273.8 850 274 858.5 275.4 C867 277 875 279.5 883.8 283 C892 286 901 289.5 909 293 C917 296.2 925 299.5 933.8 303.3 L940 303 L940 380 L750 380 Z"/></clipPath>
</defs>
<g clip-path="url(#stageclip)">
<rect x="231" y="63.5" width="860" height="410.5" fill="#fee4c9"/>

<!-- left hair + grey cloak -->
<path d="M287.5 103.5 C294 118 296 133 295 150 C294 172 289 197 282 222 C278 238 274 246 271 250 L241 311 C240.5 336 241 360 242.6 382 C245 404 249 424 253.6 438.7 C256 447 260 453 261.4 459 C262.5 464 262 468 260 470 C258 472 256 473 253.6 474 L231 474 L231 140 Z" fill="#908181"/>
<path d="M231 63.5 L319.5 63.5 L287.5 103.5 L231 182 Z" fill="url(#hairL)"/>
<path d="M231 88 L251 63.5" stroke="#f2a45c" stroke-width="1.8" fill="none"/>

<!-- right: hair back, white bg, strands -->
<path d="M1010 63.5 L1091 63.5 L1091 173.6 L1014 181 Z" fill="url(#hairR2)"/>
<path d="M1091 173.6 L1016 180.4 C1014 187 1013.5 192 1013.5 197 L1012.5 246 L1011.5 325 L985 322 L992.4 474 L1091 474 Z" fill="#ffffff"/>
<path d="M1013 197 C1015.5 214 1015 232 1012 246 L1010.5 246 L1011 197 Z" fill="#5a5a5a"/>
<path d="M970 320.4 L984.5 322 C986 360 989 420 992.4 474 L982.5 474 C981 450 977 410 972.7 371 C971 350 970 335 970 320.4 Z" fill="#6f6f71"/>
<path d="M965.6 63.5 L1030 63.5 C1026 80 1024 90 1023 96 C1024 120 1022 150 1018.9 181 C1015 190 1014 195 1014 197 L1011.5 246 L1011.5 325 L970.8 317.7 L969 308 C968.6 298 968.8 288 969.6 278 C972 266 977 254 980.7 246 C985 232 987.5 220 986.8 209 C986.4 190 985 170 983.4 155 C981 135 978 115 975 101 C972 88 969 76 965.6 63.5 Z" fill="url(#hairR1)"/>
<path d="M1010.7 63.5 C1016 82 1020 98 1021.7 114.7 C1022 135 1020.5 155 1017.6 175 C1013 200 1004 226 993 248.7 C990 236 988 220 986.8 200" fill="none" stroke="#f4b06a" stroke-width="2"/>
<path d="M1028.5 63.5 C1026.5 75 1024.5 86 1023 95.6" fill="none" stroke="#f4b06a" stroke-width="2"/>
<path d="M1091 173.6 L1016 180.4" fill="none" stroke="#f4b46c" stroke-width="1.2"/>
<path d="M970.8 317.7 L1011.5 325 L1011.5 246" fill="none" stroke="#f4b06a" stroke-width="1.3"/>
<!-- face contour lines -->
<path d="M965.6 63.5 C969 76 972 88 975 101 C978 115 981 135 983.4 155 C985 170 986.4 190 986.8 209 C987.5 220 985 232 980.7 246 C977 254 972 266 969.6 278 C968.4 292 968.4 305 970 320.4 C970.6 340 971.4 355 972.7 371 C975 395 977.5 420 979 437 C980.5 452 981.5 463 982.5 474" fill="none" stroke="#f0c6a0" stroke-width="3.4"/>
<path d="M751 207 C750 225 748.5 245 750.5 266 C756 292 766 320 776 350 C790 392 800 432 810 474" fill="none" stroke="#f0c6a2" stroke-width="3"/>
<path d="M652 455 L628 475" fill="none" stroke="#f2b274" stroke-width="3"/>

<!-- eyebrows -->
<clipPath id="browclip0"><path d="M334.4 245.9 C339 232 348 215 358.3 200.9 C369 186 382 175 396.6 167.4 C410 160.5 422 156.5 435 154 C446 152.4 455 151.8 463.7 152 C474 152.2 484 152.8 492.4 154 C502 155.6 511 158.2 519 161 C526 163.2 532 165.2 538.3 167.4 C552 172 564 176 576.6 180.8 C590 186 603 191 615 196 C629 202 642 208 653 214 C661 218.5 667 222.5 672.4 227.7 C678 233 681.5 238 683 243 C684 248 683 253 680 256.4 C677 260.5 673 263.5 668.6 265 C664 266.7 659 267.3 653 267 C650 266.8 647 266.5 643.7 266 C634 264 625 261.2 615 258 C602 254.5 589 250.5 576.6 246.9 C563 242.5 550 237.5 538 233.4 C531 231.2 525 229 519 227 C508 222.8 496 218.6 483 216 C470 214.5 457 214.3 444.5 215 C431 216 418 218.3 406 221 C393 224 380 227.7 368 231.5 C356 235.5 345 240.5 334.4 245.9 Z"/></clipPath><path d="M334.4 245.9 C339 232 348 215 358.3 200.9 C369 186 382 175 396.6 167.4 C410 160.5 422 156.5 435 154 C446 152.4 455 151.8 463.7 152 C474 152.2 484 152.8 492.4 154 C502 155.6 511 158.2 519 161 C526 163.2 532 165.2 538.3 167.4 C552 172 564 176 576.6 180.8 C590 186 603 191 615 196 C629 202 642 208 653 214 C661 218.5 667 222.5 672.4 227.7 C678 233 681.5 238 683 243 C684 248 683 253 680 256.4 C677 260.5 673 263.5 668.6 265 C664 266.7 659 267.3 653 267 C650 266.8 647 266.5 643.7 266 C634 264 625 261.2 615 258 C602 254.5 589 250.5 576.6 246.9 C563 242.5 550 237.5 538 233.4 C531 231.2 525 229 519 227 C508 222.8 496 218.6 483 216 C470 214.5 457 214.3 444.5 215 C431 216 418 218.3 406 221 C393 224 380 227.7 368 231.5 C356 235.5 345 240.5 334.4 245.9 Z" fill="#240003" stroke="#040000" stroke-width="3.4" stroke-linejoin="round"/><path d="M334.4 245.9 C339 232 348 215 358.3 200.9 C369 186 382 175 396.6 167.4 C410 160.5 422 156.5 435 154 C446 152.4 455 151.8 463.7 152 C474 152.2 484 152.8 492.4 154 C502 155.6 511 158.2 519 161 C526 163.2 532 165.2 538.3 167.4 C552 172 564 176 576.6 180.8 C590 186 603 191 615 196 C629 202 642 208 653 214 C661 218.5 667 222.5 672.4 227.7 C678 233 681.5 238 683 243 C684 248 683 253 680 256.4 C677 260.5 673 263.5 668.6 265 C664 266.7 659 267.3 653 267 C650 266.8 647 266.5 643.7 266 C634 264 625 261.2 615 258 C602 254.5 589 250.5 576.6 246.9 C563 242.5 550 237.5 538 233.4 C531 231.2 525 229 519 227 C508 222.8 496 218.6 483 216 C470 214.5 457 214.3 444.5 215 C431 216 418 218.3 406 221 C393 224 380 227.7 368 231.5 C356 235.5 345 240.5 334.4 245.9 Z" fill="none" stroke="#040000" stroke-width="7.2" stroke-linejoin="round" clip-path="url(#browclip0)"/>
<clipPath id="browclip1"><path d="M745.6 265.7 C745 260 745 256 745.6 251 C747 243 750 235 754 227 C760 218 768 210 778 202 C790 192.5 802 183.5 814 174.7 C826 166 838 157 849.7 148.3 C858 142.5 866 137 873.7 132.7 C882 128.5 890 126 897.6 125.6 C906 125 914 125.8 921.6 128 C929 131 935 135.5 940.7 141 C947 148 951.5 155 955 162.7 C958.5 169.5 961.5 176.5 963.5 184 C965.5 192 966.7 199 967 207 C964 206.8 961 206.5 957.5 205.8 C952 202 946 199 940.7 197.4 C934 196 928 195.7 921.6 196 C913 197.3 905 200 897.6 203.4 C889 207.5 881 212.5 873.7 217.8 C862 224 850 230 837.8 235.7 C826 240.5 814 245 801.8 248.9 C790 253 778 257 766 260.9 C759 263 752 264.6 745.6 265.7 Z"/></clipPath><path d="M745.6 265.7 C745 260 745 256 745.6 251 C747 243 750 235 754 227 C760 218 768 210 778 202 C790 192.5 802 183.5 814 174.7 C826 166 838 157 849.7 148.3 C858 142.5 866 137 873.7 132.7 C882 128.5 890 126 897.6 125.6 C906 125 914 125.8 921.6 128 C929 131 935 135.5 940.7 141 C947 148 951.5 155 955 162.7 C958.5 169.5 961.5 176.5 963.5 184 C965.5 192 966.7 199 967 207 C964 206.8 961 206.5 957.5 205.8 C952 202 946 199 940.7 197.4 C934 196 928 195.7 921.6 196 C913 197.3 905 200 897.6 203.4 C889 207.5 881 212.5 873.7 217.8 C862 224 850 230 837.8 235.7 C826 240.5 814 245 801.8 248.9 C790 253 778 257 766 260.9 C759 263 752 264.6 745.6 265.7 Z" fill="#240003" stroke="#040000" stroke-width="3.4" stroke-linejoin="round"/><path d="M745.6 265.7 C745 260 745 256 745.6 251 C747 243 750 235 754 227 C760 218 768 210 778 202 C790 192.5 802 183.5 814 174.7 C826 166 838 157 849.7 148.3 C858 142.5 866 137 873.7 132.7 C882 128.5 890 126 897.6 125.6 C906 125 914 125.8 921.6 128 C929 131 935 135.5 940.7 141 C947 148 951.5 155 955 162.7 C958.5 169.5 961.5 176.5 963.5 184 C965.5 192 966.7 199 967 207 C964 206.8 961 206.5 957.5 205.8 C952 202 946 199 940.7 197.4 C934 196 928 195.7 921.6 196 C913 197.3 905 200 897.6 203.4 C889 207.5 881 212.5 873.7 217.8 C862 224 850 230 837.8 235.7 C826 240.5 814 245 801.8 248.9 C790 253 778 257 766 260.9 C759 263 752 264.6 745.6 265.7 Z" fill="none" stroke="#040000" stroke-width="7.2" stroke-linejoin="round" clip-path="url(#browclip1)"/>

<!-- left eye -->
<path d="M411.5 323.2 C420 306 436 293 451 289 C470 284 495 280.5 517.7 279.5 C545 279 562 287 573 297 C582 306 587.5 320 587.8 338.8 C586 348 582 353 578 355.5 C562 365 540 370.5 508.5 372.3 C480 371.5 455 363 441 352 C428 344 418 335 411.5 323.2 Z" fill="#e19a5a"/>
<path d="M411.5 323.2 C420 306 436 293 451 289 C470 284 495 280.5 517.7 279.5 C545 279 562 287 573 297 C582 306 587.5 320 587.8 338.8 C586 348 582 353 578 355.5 C562 365 540 370.5 508.5 372.3 C480 371.5 455 363 441 352 C428 344 418 335 411.5 323.2 Z" fill="#ffffff" clip-path="url(#belowLashL)"/>
<g clip-path="url(#eyeLclip)">
<circle cx="512.9" cy="330.4" r="40" fill="url(#irisL)"/>
<circle cx="513.8" cy="326.7" r="23.8" fill="#1c0600"/>
</g>
<path d="M411.5 323.2 C420 306 436 293 451 289 C470 284 495 280.5 517.7 279.5 C545 279 562 287 573 297 C582 306 587.5 320 587.8 338.8 C586 348 582 353 578 355.5 C562 365 540 370.5 508.5 372.3 C480 371.5 455 363 441 352 C428 344 418 335 411.5 323.2 Z" fill="none" stroke="#e19a5a" stroke-width="4.8"/>
<circle cx="494" cy="303.4" r="11.4" fill="#fff"/>
<circle cx="531.5" cy="340.2" r="8.8" fill="#fff"/>
<path d="M379.2 320.4 C386 319 392 317.5 397.7 314.8 C407 310 416 305 425.4 300 C434 296 443 293 453 290.8 C465 288.2 478 286.3 490 285.3 C503 284.3 515 284 527 284.4 C537 285.3 546 287.3 554.6 290.8 C562 294 568 297.5 573 302 C578 306.5 581.5 312 584 318.5 C586.7 325 588.7 331 589.7 337 C587 334.5 584.5 332 582.3 329.6 C577 322 571 316 563.8 311 C558 307 552 304.3 545.4 302.8 C537 300.6 528 299.3 517.7 299 C505 299.3 493 300.3 480.8 302 C468 304.5 456 307.8 443.8 312 C432 316.3 421 320.5 410.6 325 C404 325.3 398 324.8 392 323.7 C387 322.8 383 321.8 379.2 320.4 Z" fill="#0c0c0c"/>

<!-- right eye -->
<path d="M762.8 333 C764 322 766 316 770.5 309 C778 294 790 281 803 275 C816 268.6 830 264 841.5 263.5 C860 263.5 878 269 892 278.8 C902 287 908 297 909 307.5 C908 318 904 325 899 331 C890 340 878 347 866 351 C852 355.5 838 357.6 824.6 358 C806 357.6 790 355 776 350 C768 347 764 342 762.8 333 Z" fill="#e19a5a"/>
<path d="M762.8 333 C764 322 766 316 770.5 309 C778 294 790 281 803 275 C816 268.6 830 264 841.5 263.5 C860 263.5 878 269 892 278.8 C902 287 908 297 909 307.5 C908 318 904 325 899 331 C890 340 878 347 866 351 C852 355.5 838 357.6 824.6 358 C806 357.6 790 355 776 350 C768 347 764 342 762.8 333 Z" fill="#ffffff" clip-path="url(#belowLashR)"/>
<g clip-path="url(#eyeRclip)">
<circle cx="842" cy="313.5" r="38.2" fill="url(#irisR)"/>
<circle cx="843" cy="311.5" r="23" fill="#1c0600"/>
</g>
<path d="M762.8 333 C764 322 766 316 770.5 309 C778 294 790 281 803 275 C816 268.6 830 264 841.5 263.5 C860 263.5 878 269 892 278.8 C902 287 908 297 909 307.5 C908 318 904 325 899 331 C890 340 878 347 866 351 C852 355.5 838 357.6 824.6 358 C806 357.6 790 355 776 350 C768 347 764 342 762.8 333 Z" fill="none" stroke="#e19a5a" stroke-width="4.8"/>
<circle cx="824.6" cy="291.5" r="9" fill="#fff"/>
<circle cx="859.3" cy="324" r="8.1" fill="#fff"/>
<path d="M761 309 C768 304 775 299 782 294 C790 288.5 799 284 807.7 280.5 C816 277.5 824 275.5 833 274.5 C842 273.8 850 274 858.5 275.4 C867 277 875 279.5 883.8 283 C892 286 901 289.5 909 293 C917 296.2 925 299.5 933.8 303.3 C926 305 919 306.5 912.6 307.5 C908 306.8 904 305.5 900.8 304 C895 301.5 889 299.3 883.8 297.4 C875 294.5 867 292.6 858.5 291.5 C850 290.3 842 290 833 290.6 C824 291.5 816 293.2 807.7 295.7 C799 299 790 303.5 782 309 C776 312.5 770 316 765.4 319.4 Z" fill="#0c0c0c"/>

<!-- registration cross -->
<path d="M331.5 122.5 H337.5 M334.5 119.5 V125.5" stroke="#3a332c" stroke-width=".9"/>

</g>
</svg>
<!-- stage scrollbars -->
<div class="abs" style="left:1090.8px;top:63.5px;width:5.4px;height:411px;background:#565654"></div>
<div class="abs" style="left:1091px;top:190px;width:5px;height:18px;background:#cfcfcf"></div>
<div class="abs" style="left:231px;top:474px;width:860px;height:5.5px;background:#5d5d5d"></div>
<div class="abs" style="left:645px;top:474px;width:36px;height:5.5px;background:#d6d6d6"></div>
<div class="abs" style="left:1091px;top:474px;width:6.5px;height:6px;background:#323232"></div>
<div class="abs" style="left:1093px;top:475px;width:3px;height:3px;background:#5a5a5a"></div>

<!-- ================= TIMELINE ================= -->
<div class="abs" style="left:231px;top:479.5px;width:866.5px;height:249.5px;background:#323232"></div>
<div class="abs blur" id="timeline" style="left:0;top:0;width:1098px;height:731px">
<div class="abs" style="left:231px;top:479.5px;width:866.5px;height:14.5px;background:#2b2b2b"></div>
<div class="abs" style="left:231px;top:480px;width:37px;height:14px;background:#323232"></div>
<div class="t b" style="transform:scaleX(0.924);left:236px;top:482px;font-size:7.4px">Timeline</div>
<div class="t" style="transform:scaleX(0.910);left:274px;top:482px;font-size:7.2px;font-weight:bold;color:#555">Actions</div>
<div class="t" style="transform:scaleX(0.878);left:309.5px;top:482px;font-size:7.2px;font-weight:bold;color:#555">Scene</div>
<div class="abs" style="left:1085.5px;top:483.8px;width:7px;height:5.6px;background:#5c5c5c"></div>
<div class="abs" style="left:401.5px;top:518.5px;width:696px;height:23.2px;background:#2d2d2d"></div>
<div class="abs" style="left:231px;top:517.6px;width:866.5px;height:1px;background:#292929"></div>
<div class="abs" style="left:400.3px;top:494px;width:1.2px;height:235px;background:#282828"></div>
<div class="abs" style="left:401.5px;top:702.9px;width:696px;height:20.4px;background:#2e2e2e"></div>
<div class="t" style="transform:scaleX(0.935);left:424px;top:502.5px;font-size:8.4px;color:#8c8c8c">30.00</div>
<div class="t" style="left:447px;top:499px;font-size:5.6px;color:#7a7a7a">FPS</div>
<div class="t" style="left:475px;top:502.5px;font-size:8.6px;color:#5c9be6">4</div>
<div class="t" style="left:481.6px;top:498.6px;font-size:6px;color:#e8e8e8;font-weight:bold">F</div>
<div class="t" style="left:440.9px;top:532px;font-size:7px;color:#7e7e7e">5</div>
<div class="abs" style="left:439.5px;top:519px;width:1px;height:22px;background:#272727"></div>
<div class="t" style="left:488.5px;top:532px;font-size:7px;color:#7e7e7e">10</div>
<div class="abs" style="left:487.1px;top:519px;width:1px;height:22px;background:#272727"></div>
<div class="t" style="left:536.0px;top:532px;font-size:7px;color:#7e7e7e">15</div>
<div class="abs" style="left:534.6px;top:519px;width:1px;height:22px;background:#272727"></div>
<div class="t" style="left:583.6px;top:532px;font-size:7px;color:#7e7e7e">20</div>
<div class="abs" style="left:582.2px;top:519px;width:1px;height:22px;background:#272727"></div>
<div class="t" style="left:631.1px;top:532px;font-size:7px;color:#7e7e7e">25</div>
<div class="abs" style="left:629.7px;top:519px;width:1px;height:22px;background:#272727"></div>
<div class="t" style="left:678.7px;top:532px;font-size:7px;color:#7e7e7e">30</div>
<div class="abs" style="left:677.3px;top:519px;width:1px;height:22px;background:#272727"></div>
<div class="t" style="left:726.2px;top:532px;font-size:7px;color:#7e7e7e">35</div>
<div class="abs" style="left:724.8px;top:519px;width:1px;height:22px;background:#272727"></div>
<div class="t" style="left:773.8px;top:532px;font-size:7px;color:#7e7e7e">40</div>
<div class="abs" style="left:772.4px;top:519px;width:1px;height:22px;background:#272727"></div>
<div class="t" style="left:821.3px;top:532px;font-size:7px;color:#7e7e7e">45</div>
<div class="abs" style="left:819.9px;top:519px;width:1px;height:22px;background:#272727"></div>
<div class="t" style="left:868.9px;top:532px;font-size:7px;color:#7e7e7e">50</div>
<div class="abs" style="left:867.5px;top:519px;width:1px;height:22px;background:#272727"></div>
<div class="t" style="left:916.4px;top:532px;font-size:7px;color:#7e7e7e">55</div>
<div class="abs" style="left:915.0px;top:519px;width:1px;height:22px;background:#272727"></div>
<div class="t" style="left:964.0px;top:532px;font-size:7px;color:#7e7e7e">60</div>
<div class="abs" style="left:962.6px;top:519px;width:1px;height:22px;background:#272727"></div>
<div class="t" style="left:1011.5px;top:532px;font-size:7px;color:#7e7e7e">65</div>
<div class="abs" style="left:1010.1px;top:519px;width:1px;height:22px;background:#272727"></div>
<div class="t" style="left:1059.1px;top:532px;font-size:7px;color:#7e7e7e">70</div>
<div class="abs" style="left:1057.7px;top:519px;width:1px;height:22px;background:#272727"></div>
<div class="t" style="left:680.5px;top:519.5px;font-size:7.6px;color:#8a8a8a;font-style:italic">1s</div>
<div class="t" style="left:966px;top:519.5px;font-size:7.6px;color:#8a8a8a;font-style:italic">2s</div>
<svg style="left:237.3px;top:501.0px" width="10" height="10" viewBox="0 0 10 10"><rect x=".6" y=".6" width="8.8" height="8.8" rx="1" fill="none" stroke="#e4e4e4" stroke-width="1.1"/><path d="M5 2.6 V7.4 M2.6 5 H7.4" stroke="#e4e4e4" stroke-width="1.1"/></svg>
<svg style="left:259.2px;top:501.5px" width="11" height="9" viewBox="0 0 11 9"><path d="M0 1 Q0 0 1 0 H4 L5.2 1.4 H10 Q11 1.4 11 2.4 V8 Q11 9 10 9 H1 Q0 9 0 8 Z" fill="#e4e4e4"/><path d="M0 3.2 H11" stroke="#323232" stroke-width=".7"/></svg>
<svg style="left:282.3px;top:501.0px" width="8" height="10" viewBox="0 0 8 10"><rect x="0" y="1.2" width="8" height="1.3" fill="#e4e4e4"/><rect x="2.6" y="0" width="2.8" height="1.4" fill="#e4e4e4"/><path d="M.8 3.2 H7.2 L6.6 10 H1.4 Z" fill="#e4e4e4"/><path d="M3 4.4 V8.8 M5 4.4 V8.8" stroke="#323232" stroke-width=".7"/></svg>
<svg style="left:333.5px;top:502.8px" width="10" height="6.5" viewBox="0 0 10 6.5"><rect x="0" y="0" width="6.4" height="6.5" rx="1" fill="#474747"/><path d="M7 3.2 L10 .6 V5.9 Z" fill="#474747"/></svg>
<svg style="left:355.5px;top:500.5px" width="11" height="11" viewBox="0 0 11 11"><rect x="3.5" y="0" width="4" height="3.4" fill="#e4e4e4"/><path d="M5.5 3 V5 M2 7.4 V5.2 H9 V7.4" fill="none" stroke="#e4e4e4" stroke-width="1"/><path d="M0 10 L2 6.6 L4 10 Z M7 10 L9 6.6 L11 10 Z" fill="#e4e4e4"/></svg>
<svg style="left:377.0px;top:500.5px" width="11" height="11" viewBox="0 0 11 11"><path d="M1 0 V10 H11" fill="none" stroke="#e4e4e4" stroke-width="1.1"/><path d="M2.6 8 L6 4.4 L7.6 6 L10 2.4" fill="none" stroke="#e4e4e4" stroke-width="1"/><circle cx="7.6" cy="6" r="1" fill="#e4e4e4"/></svg>
<svg style="left:238.0px;top:525.3px" width="10" height="10" viewBox="0 0 10 10"><path d="M5 0 L10 2.6 L5 5.2 L0 2.6 Z" fill="#e4e4e4"/><path d="M0 5 L5 7.6 L10 5 M0 7.2 L5 9.8 L10 7.2" fill="none" stroke="#e4e4e4" stroke-width="1.1"/></svg>
<svg style="left:332.3px;top:528.8px" width="3" height="3" viewBox="0 0 3 3"><circle cx="1.5" cy="1.5" r="1.4" fill="#e4e4e4"/></svg>
<svg style="left:345.8px;top:525.8px" width="6" height="9" viewBox="0 0 6 9"><rect x=".7" y=".7" width="4.6" height="7.6" rx=".6" fill="none" stroke="#e4e4e4" stroke-width="1.3"/></svg>
<svg style="left:361.3px;top:525.8px" width="11" height="9" viewBox="0 0 11 9"><path d="M.6 4.5 Q5.5 -.8 10.4 4.5 Q5.5 9.8 .6 4.5 Z" fill="none" stroke="#e4e4e4" stroke-width="1"/><circle cx="5.5" cy="4.5" r="1.5" fill="#e4e4e4"/><path d="M1.4 .4 L9.6 8.6" stroke="#e4e4e4" stroke-width="1.1"/></svg>
<svg style="left:380.6px;top:525.6px" width="8" height="10" viewBox="0 0 7 9"><path d="M1.6 4 V2.6 Q1.6 .7 3.5 .7 Q5.4 .7 5.4 2.6 V4" fill="none" stroke="#e4e4e4" stroke-width="1.1"/><rect x=".3" y="3.8" width="6.4" height="5" rx=".6" fill="#e4e4e4"/><rect x="3" y="5.4" width="1" height="1.8" fill="#323232"/></svg>
<svg style="left:624.3px;top:501.5px" width="6" height="9" viewBox="0 0 6 9"><path d="M5 .6 L1 4.5 L5 8.4" fill="none" stroke="#e4e4e4" stroke-width="1.3"/></svg>
<svg style="left:643.0px;top:501.0px" width="10" height="10" viewBox="0 0 10 10"><rect x=".5" y="2" width="8" height="7.5" fill="#e4e4e4"/><rect x="2.6" y="4.2" width="3.6" height="3.2" fill="#323232"/><path d="M7.4 0 L9.6 3.4 H5.2 Z" fill="#e4e4e4" stroke="#323232" stroke-width=".5"/></svg>
<svg style="left:664.7px;top:501.5px" width="6" height="9" viewBox="0 0 6 9"><path d="M1 .6 L5 4.5 L1 8.4" fill="none" stroke="#e4e4e4" stroke-width="1.3"/></svg>
<div class="abs" style="left:679px;top:497px;width:1px;height:18px;background:#454545"></div>
<svg style="left:686.5px;top:502.0px" width="11" height="8" viewBox="0 0 11 8"><circle cx="3.6" cy="4" r="3.4" fill="#a8a8a8"/><circle cx="7" cy="4" r="3.7" fill="#e4e4e4" stroke="#323232" stroke-width=".6"/></svg>
<svg style="left:708.0px;top:501.5px" width="9" height="9" viewBox="0 0 9 9"><rect x="0" y="0" width="2.2" height="9" fill="#e4e4e4"/><rect x="3.4" y="0" width="2.2" height="9" fill="#e4e4e4"/><rect x="6.8" y="0" width="2.2" height="9" fill="#e4e4e4"/><rect x="0" y="6" width="9" height="1" fill="#323232"/></svg>
<svg style="left:727.5px;top:501.5px" width="10" height="9" viewBox="0 0 10 9"><circle cx="3.4" cy="4.5" r="3" fill="#404040"/><path d="M5 8 L9.6 1" stroke="#404040" stroke-width="1.2"/></svg>
<svg style="left:747.8px;top:502.0px" width="10" height="8" viewBox="0 0 10 8"><rect x="0" y="0" width="10" height="8" fill="#e4e4e4"/><rect x="2" y="3.4" width="6" height="4.6" fill="#323232"/><rect x="4" y="3.4" width="2" height="2.6" fill="#e4e4e4"/></svg>
<div class="abs" style="left:765px;top:497px;width:1px;height:18px;background:#454545"></div>
<svg style="left:771.8px;top:501.0px" width="11" height="10" viewBox="0 0 11 10"><path d="M.6 3.4 V9.4 H10.4 V3.4 H6" fill="none" stroke="#e4e4e4" stroke-width="1.2"/><path d="M.6 3.4 H4" stroke="#e4e4e4" stroke-width="1.2"/><path d="M5 .2 L9 3.4 L5 6.6 Z" fill="#e4e4e4" transform="translate(-1 -1)"/></svg>
<svg style="left:793.9px;top:502.0px" width="9" height="8" viewBox="0 0 9 8"><path d="M5.4 4 L0 0 V8 Z" fill="#e4e4e4" transform="translate(5.4 0) scale(-1 1) translate(0 0)"/><rect x="7" y="0" width="1.6" height="8" fill="#e4e4e4"/></svg>
<svg style="left:814.0px;top:501.5px" width="8" height="9" viewBox="0 0 8 9"><path d="M.4 0 L8 4.5 L.4 9 Z" fill="#e4e4e4"/></svg>
<svg style="left:833.5px;top:502.0px" width="9" height="8" viewBox="0 0 9 8"><rect x=".4" y="0" width="1.6" height="8" fill="#e4e4e4"/><path d="M3.4 0 L9 4 L3.4 8 Z" fill="#e4e4e4"/></svg>
<svg style="left:988.8px;top:502.0px" width="10" height="8" viewBox="0 0 10 8"><path d="M2.4 2.6 H6.4 Q9.4 2.6 9.4 5 Q9.4 6.4 8 6.4" fill="none" stroke="#e4e4e4" stroke-width="1.2"/><path d="M3.4 0 L.4 2.6 L3.4 5.2 Z" fill="#e4e4e4"/><rect x="1" y="7" width="8.6" height="1" fill="#e4e4e4"/></svg>
<div class="abs" style="left:1012px;top:505.5px;width:52px;height:1px;background:#4c4c4c"></div>
<div class="abs" style="left:1027px;top:501.7px;width:8.6px;height:8.6px;border:1.4px solid #e4e4e4;border-radius:50%;background:#323232"></div>
<svg style="left:1076.8px;top:503.4px" width="11" height="6" viewBox="0 0 11 6"><path d="M0 6 L3.6 .6 L6 4 L7.6 1.6 L11 6 Z" fill="#e4e4e4"/></svg>
<div class="abs" style="left:231px;top:541.7px;width:170.5px;height:13.4px;background:#366498"></div>
<svg style="left:250.8px;top:543.9px" width="8" height="8" viewBox="0 0 9 9"><path d="M.5 .5 H8.5 V8.5 H3 L.5 6 Z" fill="#c2c2c2" stroke="#e2e2e2" stroke-width=".9"/><path d="M.5 6 L3 8.5 V6 Z" fill="#7e7e7e"/><path d="M.5 6 H3 V8.5" fill="none" stroke="#9a9a9a" stroke-width=".6"/></svg>
<div class="t" style="transform:scaleX(0.910);left:266.5px;top:544.9px;font-size:7.4px;color:#f4f4f4">K_Back_Eye_Brow</div>
<div class="abs" style="left:347px;top:543.7px;width:4.8px;height:9.2px;background:#ea5cf0;border-radius:.8px"></div>
<svg style="left:380.7px;top:543.3px" width="7" height="9" viewBox="0 0 7 9"><path d="M1.6 4 V2.6 Q1.6 .7 3.5 .7 Q5.4 .7 5.4 2.6 V4" fill="none" stroke="#e2e2e2" stroke-width="1.1"/><rect x=".3" y="3.8" width="6.4" height="5" rx=".6" fill="#e2e2e2"/><rect x="3" y="5.4" width="1" height="1.8" fill="#323232"/></svg>
<div class="abs" style="left:231px;top:568.1px;width:170.5px;height:1px;background:#2a2a2a"></div>
<svg style="left:250.8px;top:557.3px" width="8" height="8" viewBox="0 0 9 9"><path d="M.5 .5 H8.5 V8.5 H3 L.5 6 Z" fill="#c2c2c2" stroke="#e2e2e2" stroke-width=".9"/><path d="M.5 6 L3 8.5 V6 Z" fill="#7e7e7e"/><path d="M.5 6 H3 V8.5" fill="none" stroke="#9a9a9a" stroke-width=".6"/></svg>
<div class="t" style="transform:scaleX(0.910);left:266.5px;top:558.3px;font-size:7.4px;color:#d2d2d2">K_Front_Eye_Br...</div>
<div class="abs" style="left:347px;top:557.1px;width:4.8px;height:9.2px;background:#1a9c8c;border-radius:.8px"></div>
<svg style="left:380.7px;top:556.7px" width="7" height="9" viewBox="0 0 7 9"><path d="M1.6 4 V2.6 Q1.6 .7 3.5 .7 Q5.4 .7 5.4 2.6 V4" fill="none" stroke="#e2e2e2" stroke-width="1.1"/><rect x=".3" y="3.8" width="6.4" height="5" rx=".6" fill="#e2e2e2"/><rect x="3" y="5.4" width="1" height="1.8" fill="#323232"/></svg>
<div class="abs" style="left:231px;top:581.5px;width:170.5px;height:1px;background:#2a2a2a"></div>
<svg style="left:250.8px;top:570.8px" width="8" height="8" viewBox="0 0 9 9"><path d="M.5 .5 H8.5 V8.5 H3 L.5 6 Z" fill="#c2c2c2" stroke="#e2e2e2" stroke-width=".9"/><path d="M.5 6 L3 8.5 V6 Z" fill="#7e7e7e"/><path d="M.5 6 H3 V8.5" fill="none" stroke="#9a9a9a" stroke-width=".6"/></svg>
<div class="t" style="transform:scaleX(0.910);left:266.5px;top:571.8px;font-size:7.4px;color:#d2d2d2">Layer_6</div>
<div class="abs" style="left:347px;top:570.6px;width:4.8px;height:9.2px;background:#ea1a1a;border-radius:.8px"></div>
<svg style="left:380.7px;top:570.2px" width="7" height="9" viewBox="0 0 7 9"><path d="M1.6 4 V2.6 Q1.6 .7 3.5 .7 Q5.4 .7 5.4 2.6 V4" fill="none" stroke="#e2e2e2" stroke-width="1.1"/><rect x=".3" y="3.8" width="6.4" height="5" rx=".6" fill="#e2e2e2"/><rect x="3" y="5.4" width="1" height="1.8" fill="#323232"/></svg>
<div class="abs" style="left:231px;top:594.9px;width:170.5px;height:1px;background:#2a2a2a"></div>
<svg style="left:250.8px;top:584.2px" width="8" height="8" viewBox="0 0 9 9"><path d="M.5 .5 H8.5 V8.5 H3 L.5 6 Z" fill="#c2c2c2" stroke="#e2e2e2" stroke-width=".9"/><path d="M.5 6 L3 8.5 V6 Z" fill="#7e7e7e"/><path d="M.5 6 H3 V8.5" fill="none" stroke="#9a9a9a" stroke-width=".6"/></svg>
<div class="t" style="transform:scaleX(0.910);left:266.5px;top:585.2px;font-size:7.4px;color:#d2d2d2">Layer_8</div>
<div class="abs" style="left:347px;top:584.0px;width:4.8px;height:9.2px;background:#ee5c5c;border-radius:.8px"></div>
<svg style="left:380.7px;top:583.6px" width="7" height="9" viewBox="0 0 7 9"><path d="M1.6 4 V2.6 Q1.6 .7 3.5 .7 Q5.4 .7 5.4 2.6 V4" fill="none" stroke="#e2e2e2" stroke-width="1.1"/><rect x=".3" y="3.8" width="6.4" height="5" rx=".6" fill="#e2e2e2"/><rect x="3" y="5.4" width="1" height="1.8" fill="#323232"/></svg>
<div class="abs" style="left:231px;top:608.4px;width:170.5px;height:1px;background:#2a2a2a"></div>
<svg style="left:250.8px;top:599.2px" width="8" height="6.2" viewBox="0 0 9 7"><rect x=".5" y=".5" width="8" height="6" fill="#c4c4c4" stroke="#e2e2e2" stroke-width=".8"/><rect x="2.4" y="1.8" width="4.2" height="3.4" fill="#2c2c2c"/><circle cx="4.5" cy="3.5" r="1" fill="#e8e8e8"/></svg>
<div class="t" style="transform:scaleX(0.910);left:266.5px;top:598.6px;font-size:7.4px;color:#d2d2d2">Mask</div>
<div class="abs" style="left:347px;top:597.4px;width:4.8px;height:9.2px;background:#1ae2ea;border-radius:.8px"></div>
<svg style="left:380.7px;top:597.0px" width="7" height="9" viewBox="0 0 7 9"><path d="M1.6 4 V2.6 Q1.6 .7 3.5 .7 Q5.4 .7 5.4 2.6 V4" fill="none" stroke="#e2e2e2" stroke-width="1.1"/><rect x=".3" y="3.8" width="6.4" height="5" rx=".6" fill="#e2e2e2"/><rect x="3" y="5.4" width="1" height="1.8" fill="#323232"/></svg>
<div class="abs" style="left:231px;top:621.8px;width:170.5px;height:1px;background:#2a2a2a"></div>
<svg style="left:263.2px;top:611.1px" width="7.8" height="7.8" viewBox="0 0 9 9"><path d="M.5 .5 H8.5 V8.5 H3 L.5 6 Z" fill="#c2c2c2" stroke="#e2e2e2" stroke-width=".9"/><path d="M1.6 1.6 L5.6 1.6 L1.6 5.6 Z" fill="#2a2a2a"/><path d="M.5 6 L3 8.5 V6 Z" fill="#8a8a8a"/></svg>
<div class="t" style="transform:scaleX(0.910);left:278.5px;top:612.1px;font-size:7.4px;color:#d2d2d2">Layer_15</div>
<div class="abs" style="left:347px;top:610.9px;width:4.8px;height:9.2px;background:#ee5c5c;border-radius:.8px"></div>
<svg style="left:380.7px;top:610.5px" width="7" height="9" viewBox="0 0 7 9"><path d="M1.6 4 V2.6 Q1.6 .7 3.5 .7 Q5.4 .7 5.4 2.6 V4" fill="none" stroke="#e2e2e2" stroke-width="1.1"/><rect x=".3" y="3.8" width="6.4" height="5" rx=".6" fill="#e2e2e2"/><rect x="3" y="5.4" width="1" height="1.8" fill="#323232"/></svg>
<div class="abs" style="left:231px;top:635.2px;width:170.5px;height:1px;background:#2a2a2a"></div>
<svg style="left:263.2px;top:624.5px" width="7.8" height="7.8" viewBox="0 0 9 9"><path d="M.5 .5 H8.5 V8.5 H3 L.5 6 Z" fill="#c2c2c2" stroke="#e2e2e2" stroke-width=".9"/><path d="M1.6 1.6 L5.6 1.6 L1.6 5.6 Z" fill="#2a2a2a"/><path d="M.5 6 L3 8.5 V6 Z" fill="#8a8a8a"/></svg>
<div class="t" style="transform:scaleX(0.910);left:278.5px;top:625.5px;font-size:7.4px;color:#d2d2d2">K_Front_Eye...</div>
<div class="abs" style="left:347px;top:624.3px;width:4.8px;height:9.2px;background:#a342d2;border-radius:.8px"></div>
<svg style="left:380.7px;top:623.9px" width="7" height="9" viewBox="0 0 7 9"><path d="M1.6 4 V2.6 Q1.6 .7 3.5 .7 Q5.4 .7 5.4 2.6 V4" fill="none" stroke="#e2e2e2" stroke-width="1.1"/><rect x=".3" y="3.8" width="6.4" height="5" rx=".6" fill="#e2e2e2"/><rect x="3" y="5.4" width="1" height="1.8" fill="#323232"/></svg>
<div class="abs" style="left:231px;top:648.6px;width:170.5px;height:1px;background:#2a2a2a"></div>
<svg style="left:250.8px;top:639.5px" width="8" height="6.2" viewBox="0 0 9 7"><rect x=".5" y=".5" width="8" height="6" fill="#c4c4c4" stroke="#e2e2e2" stroke-width=".8"/><rect x="2.4" y="1.8" width="4.2" height="3.4" fill="#2c2c2c"/><circle cx="4.5" cy="3.5" r="1" fill="#e8e8e8"/></svg>
<div class="t" style="transform:scaleX(0.910);left:266.5px;top:638.9px;font-size:7.4px;color:#d2d2d2">Mask</div>
<div class="abs" style="left:347px;top:637.7px;width:4.8px;height:9.2px;background:#6ea21a;border-radius:.8px"></div>
<svg style="left:380.7px;top:637.3px" width="7" height="9" viewBox="0 0 7 9"><path d="M1.6 4 V2.6 Q1.6 .7 3.5 .7 Q5.4 .7 5.4 2.6 V4" fill="none" stroke="#e2e2e2" stroke-width="1.1"/><rect x=".3" y="3.8" width="6.4" height="5" rx=".6" fill="#e2e2e2"/><rect x="3" y="5.4" width="1" height="1.8" fill="#323232"/></svg>
<div class="abs" style="left:231px;top:662.1px;width:170.5px;height:1px;background:#2a2a2a"></div>
<svg style="left:263.2px;top:651.3px" width="7.8" height="7.8" viewBox="0 0 9 9"><path d="M.5 .5 H8.5 V8.5 H3 L.5 6 Z" fill="#c2c2c2" stroke="#e2e2e2" stroke-width=".9"/><path d="M1.6 1.6 L5.6 1.6 L1.6 5.6 Z" fill="#2a2a2a"/><path d="M.5 6 L3 8.5 V6 Z" fill="#8a8a8a"/></svg>
<div class="t" style="transform:scaleX(0.910);left:278.5px;top:652.3px;font-size:7.4px;color:#d2d2d2">Blink</div>
<div class="abs" style="left:347px;top:651.1px;width:4.8px;height:9.2px;background:#ea1a1a;border-radius:.8px"></div>
<svg style="left:380.7px;top:650.7px" width="7" height="9" viewBox="0 0 7 9"><path d="M1.6 4 V2.6 Q1.6 .7 3.5 .7 Q5.4 .7 5.4 2.6 V4" fill="none" stroke="#e2e2e2" stroke-width="1.1"/><rect x=".3" y="3.8" width="6.4" height="5" rx=".6" fill="#e2e2e2"/><rect x="3" y="5.4" width="1" height="1.8" fill="#323232"/></svg>
<div class="abs" style="left:231px;top:675.5px;width:170.5px;height:1px;background:#2a2a2a"></div>
<svg style="left:263.2px;top:664.8px" width="7.8" height="7.8" viewBox="0 0 9 9"><path d="M.5 .5 H8.5 V8.5 H3 L.5 6 Z" fill="#c2c2c2" stroke="#e2e2e2" stroke-width=".9"/><path d="M1.6 1.6 L5.6 1.6 L1.6 5.6 Z" fill="#2a2a2a"/><path d="M.5 6 L3 8.5 V6 Z" fill="#8a8a8a"/></svg>
<div class="t" style="transform:scaleX(0.910);left:278.5px;top:665.8px;font-size:7.4px;color:#d2d2d2">K_Front_Eye...</div>
<div class="abs" style="left:347px;top:664.6px;width:4.8px;height:9.2px;background:#f28c1a;border-radius:.8px"></div>
<svg style="left:380.7px;top:664.2px" width="7" height="9" viewBox="0 0 7 9"><path d="M1.6 4 V2.6 Q1.6 .7 3.5 .7 Q5.4 .7 5.4 2.6 V4" fill="none" stroke="#e2e2e2" stroke-width="1.1"/><rect x=".3" y="3.8" width="6.4" height="5" rx=".6" fill="#e2e2e2"/><rect x="3" y="5.4" width="1" height="1.8" fill="#323232"/></svg>
<div class="abs" style="left:231px;top:688.9px;width:170.5px;height:1px;background:#2a2a2a"></div>
<svg style="left:250.8px;top:678.2px" width="8" height="8" viewBox="0 0 9 9"><path d="M.5 .5 H8.5 V8.5 H3 L.5 6 Z" fill="#c2c2c2" stroke="#e2e2e2" stroke-width=".9"/><path d="M.5 6 L3 8.5 V6 Z" fill="#7e7e7e"/><path d="M.5 6 H3 V8.5" fill="none" stroke="#9a9a9a" stroke-width=".6"/></svg>
<div class="t" style="transform:scaleX(0.910);left:266.5px;top:679.2px;font-size:7.4px;color:#d2d2d2">WE</div>
<div class="abs" style="left:347px;top:678.0px;width:4.8px;height:9.2px;background:#6ea21a;border-radius:.8px"></div>
<svg style="left:380.7px;top:677.6px" width="7" height="9" viewBox="0 0 7 9"><path d="M1.6 4 V2.6 Q1.6 .7 3.5 .7 Q5.4 .7 5.4 2.6 V4" fill="none" stroke="#e2e2e2" stroke-width="1.1"/><rect x=".3" y="3.8" width="6.4" height="5" rx=".6" fill="#e2e2e2"/><rect x="3" y="5.4" width="1" height="1.8" fill="#323232"/></svg>
<div class="abs" style="left:231px;top:702.4px;width:170.5px;height:1px;background:#2a2a2a"></div>
<svg style="left:250.8px;top:691.6px" width="8" height="8" viewBox="0 0 9 9"><path d="M.5 .5 H8.5 V8.5 H3 L.5 6 Z" fill="#c2c2c2" stroke="#e2e2e2" stroke-width=".9"/><path d="M.5 6 L3 8.5 V6 Z" fill="#7e7e7e"/><path d="M.5 6 H3 V8.5" fill="none" stroke="#9a9a9a" stroke-width=".6"/></svg>
<div class="t" style="transform:scaleX(0.910);left:266.5px;top:692.6px;font-size:7.4px;color:#d2d2d2">WE</div>
<div class="abs" style="left:347px;top:691.4px;width:4.8px;height:9.2px;background:#1ae2ea;border-radius:.8px"></div>
<svg style="left:380.7px;top:691.0px" width="7" height="9" viewBox="0 0 7 9"><path d="M1.6 4 V2.6 Q1.6 .7 3.5 .7 Q5.4 .7 5.4 2.6 V4" fill="none" stroke="#e2e2e2" stroke-width="1.1"/><rect x=".3" y="3.8" width="6.4" height="5" rx=".6" fill="#e2e2e2"/><rect x="3" y="5.4" width="1" height="1.8" fill="#323232"/></svg>
</div>
<svg id="frames" style="left:401.5px;top:541.7px" width="689.3" height="161.2" viewBox="401.5 541.7 689.3 161.2">
<defs><pattern id="ticks" x="401.5" y="541.7" width="9.51" height="13.43" patternUnits="userSpaceOnUse"><rect x="0" y="0" width="1" height="1.8" fill="#7c7c7c"/></pattern></defs>
<rect x="401.5" y="541.7" width="689.3" height="161.2" fill="#949494"/>
<rect x="401.5" y="541.7" width="57.1" height="13.43" fill="#8365ad"/>
<circle cx="406.3" cy="549.8" r="2.05" fill="#3a1d52"/>
<path d="M414.5 549.8 H455.6 M452.6 547.6 L455.6 549.8 L452.6 552.0" fill="none" stroke="#3a1d52" stroke-width=".9"/>
<rect x="468.1" y="541.7" width="57.1" height="13.43" fill="#8365ad"/>
<circle cx="472.8" cy="549.8" r="2.05" fill="#3a1d52"/>
<path d="M481.1 549.8 H522.1 M519.1 547.6 L522.1 549.8 L519.1 552.0" fill="none" stroke="#3a1d52" stroke-width=".9"/>
<rect x="458.6" y="541.7" width="9.51" height="13.43" fill="#afafaf"/>
<rect x="467.5" y="541.7" width="1.1" height="13.43" fill="#3a3a3a"/>
<circle cx="463.3" cy="549.8" r="2.05" fill="#1c1c1c"/>
<circle cx="529.9" cy="549.8" r="2.05" fill="#1c1c1c"/>
<rect x="401.5" y="555.1" width="57.1" height="13.43" fill="#8365ad"/>
<circle cx="406.3" cy="563.2" r="2.05" fill="#3a1d52"/>
<path d="M414.5 563.2 H455.6 M452.6 561.0 L455.6 563.2 L452.6 565.4" fill="none" stroke="#3a1d52" stroke-width=".9"/>
<rect x="468.1" y="555.1" width="57.1" height="13.43" fill="#8365ad"/>
<circle cx="472.8" cy="563.2" r="2.05" fill="#3a1d52"/>
<path d="M481.1 563.2 H522.1 M519.1 561.0 L522.1 563.2 L519.1 565.4" fill="none" stroke="#3a1d52" stroke-width=".9"/>
<rect x="458.6" y="555.1" width="9.51" height="13.43" fill="#afafaf"/>
<rect x="467.5" y="555.1" width="1.1" height="13.43" fill="#3a3a3a"/>
<circle cx="463.3" cy="563.2" r="2.05" fill="#1c1c1c"/>
<circle cx="529.9" cy="563.2" r="2.05" fill="#1c1c1c"/>
<rect x="401.5" y="568.6" width="123.6" height="13.43" fill="#adadad"/>
<circle cx="406.3" cy="576.7" r="2.05" fill="#1c1c1c"/>
<circle cx="415.8" cy="576.7" r="2.05" fill="#1c1c1c"/>
<rect x="410.5" y="568.6" width="1" height="13.43" fill="#4a4a4a"/>
<circle cx="425.3" cy="576.7" r="2.05" fill="#1c1c1c"/>
<rect x="420.0" y="568.6" width="1" height="13.43" fill="#4a4a4a"/>
<circle cx="434.8" cy="576.7" r="2.05" fill="#1c1c1c"/>
<rect x="429.5" y="568.6" width="1" height="13.43" fill="#4a4a4a"/>
<circle cx="444.3" cy="576.7" r="2.05" fill="#1c1c1c"/>
<rect x="439.0" y="568.6" width="1" height="13.43" fill="#4a4a4a"/>
<circle cx="453.8" cy="576.7" r="2.05" fill="#1c1c1c"/>
<rect x="448.6" y="568.6" width="1" height="13.43" fill="#4a4a4a"/>
<circle cx="463.3" cy="576.7" r="2.05" fill="#1c1c1c"/>
<rect x="458.1" y="568.6" width="1" height="13.43" fill="#4a4a4a"/>
<circle cx="472.8" cy="576.7" r="2.05" fill="#1c1c1c"/>
<rect x="467.6" y="568.6" width="1" height="13.43" fill="#4a4a4a"/>
<circle cx="482.3" cy="576.7" r="2.05" fill="#1c1c1c"/>
<rect x="477.1" y="568.6" width="1" height="13.43" fill="#4a4a4a"/>
<circle cx="491.8" cy="576.7" r="2.05" fill="#1c1c1c"/>
<rect x="486.6" y="568.6" width="1" height="13.43" fill="#4a4a4a"/>
<circle cx="501.4" cy="576.7" r="2.05" fill="#1c1c1c"/>
<rect x="496.1" y="568.6" width="1" height="13.43" fill="#4a4a4a"/>
<circle cx="510.9" cy="576.7" r="2.05" fill="#1c1c1c"/>
<rect x="505.6" y="568.6" width="1" height="13.43" fill="#4a4a4a"/>
<circle cx="520.4" cy="576.7" r="2.05" fill="#1c1c1c"/>
<rect x="515.1" y="568.6" width="1" height="13.43" fill="#4a4a4a"/>
<circle cx="529.9" cy="576.7" r="2.05" fill="#1c1c1c"/>
<rect x="524.6" y="568.6" width="1" height="13.43" fill="#4a4a4a"/>
<rect x="401.5" y="582.0" width="123.6" height="13.43" fill="#adadad"/>
<circle cx="406.3" cy="590.1" r="2.05" fill="#1c1c1c"/>
<circle cx="415.8" cy="590.1" r="2.05" fill="#1c1c1c"/>
<rect x="410.5" y="582.0" width="1" height="13.43" fill="#4a4a4a"/>
<circle cx="425.3" cy="590.1" r="2.05" fill="#1c1c1c"/>
<rect x="420.0" y="582.0" width="1" height="13.43" fill="#4a4a4a"/>
<circle cx="434.8" cy="590.1" r="2.05" fill="#1c1c1c"/>
<rect x="429.5" y="582.0" width="1" height="13.43" fill="#4a4a4a"/>
<circle cx="444.3" cy="590.1" r="2.05" fill="#1c1c1c"/>
<rect x="439.0" y="582.0" width="1" height="13.43" fill="#4a4a4a"/>
<circle cx="453.8" cy="590.1" r="2.05" fill="#1c1c1c"/>
<rect x="448.6" y="582.0" width="1" height="13.43" fill="#4a4a4a"/>
<circle cx="463.3" cy="590.1" r="2.05" fill="#1c1c1c"/>
<rect x="458.1" y="582.0" width="1" height="13.43" fill="#4a4a4a"/>
<circle cx="472.8" cy="590.1" r="2.05" fill="#1c1c1c"/>
<rect x="467.6" y="582.0" width="1" height="13.43" fill="#4a4a4a"/>
<circle cx="482.3" cy="590.1" r="2.05" fill="#1c1c1c"/>
<rect x="477.1" y="582.0" width="1" height="13.43" fill="#4a4a4a"/>
<circle cx="491.8" cy="590.1" r="2.05" fill="#1c1c1c"/>
<rect x="486.6" y="582.0" width="1" height="13.43" fill="#4a4a4a"/>
<circle cx="501.4" cy="590.1" r="2.05" fill="#1c1c1c"/>
<rect x="496.1" y="582.0" width="1" height="13.43" fill="#4a4a4a"/>
<circle cx="510.9" cy="590.1" r="2.05" fill="#1c1c1c"/>
<rect x="505.6" y="582.0" width="1" height="13.43" fill="#4a4a4a"/>
<circle cx="520.4" cy="590.1" r="2.05" fill="#1c1c1c"/>
<rect x="515.1" y="582.0" width="1" height="13.43" fill="#4a4a4a"/>
<circle cx="529.9" cy="590.1" r="2.05" fill="#1c1c1c"/>
<rect x="524.6" y="582.0" width="1" height="13.43" fill="#4a4a4a"/>
<circle cx="406.3" cy="603.5" r="2.05" fill="#1c1c1c"/>
<rect x="401.5" y="608.9" width="57.1" height="13.43" fill="#a46e3e"/>
<circle cx="406.3" cy="617.0" r="2.05" fill="#5e3512"/>
<path d="M414.5 617.0 H455.6 M452.6 614.8 L455.6 617.0 L452.6 619.2" fill="none" stroke="#5e3512" stroke-width=".9"/>
<rect x="468.1" y="608.9" width="57.1" height="13.43" fill="#a46e3e"/>
<circle cx="472.8" cy="617.0" r="2.05" fill="#5e3512"/>
<path d="M481.1 617.0 H522.1 M519.1 614.8 L522.1 617.0 L519.1 619.2" fill="none" stroke="#5e3512" stroke-width=".9"/>
<rect x="458.6" y="608.9" width="9.51" height="13.43" fill="#afafaf"/>
<rect x="467.5" y="608.9" width="1.1" height="13.43" fill="#3a3a3a"/>
<circle cx="463.3" cy="617.0" r="2.05" fill="#1c1c1c"/>
<circle cx="529.9" cy="617.0" r="2.05" fill="#1c1c1c"/>
<circle cx="406.3" cy="630.4" r="2.05" fill="#1c1c1c"/>
<circle cx="406.3" cy="643.8" r="2.05" fill="#1c1c1c"/>
<rect x="401.5" y="649.1" width="57.1" height="13.43" fill="#a46e3e"/>
<circle cx="406.3" cy="657.3" r="2.05" fill="#5e3512"/>
<path d="M414.5 657.3 H455.6 M452.6 655.1 L455.6 657.3 L452.6 659.5" fill="none" stroke="#5e3512" stroke-width=".9"/>
<rect x="468.1" y="649.1" width="57.1" height="13.43" fill="#a46e3e"/>
<circle cx="472.8" cy="657.3" r="2.05" fill="#5e3512"/>
<path d="M481.1 657.3 H522.1 M519.1 655.1 L522.1 657.3 L519.1 659.5" fill="none" stroke="#5e3512" stroke-width=".9"/>
<rect x="458.6" y="649.1" width="9.51" height="13.43" fill="#afafaf"/>
<rect x="467.5" y="649.1" width="1.1" height="13.43" fill="#3a3a3a"/>
<circle cx="463.3" cy="657.3" r="2.05" fill="#1c1c1c"/>
<circle cx="529.9" cy="657.3" r="2.05" fill="#1c1c1c"/>
<circle cx="406.3" cy="670.7" r="2.05" fill="#1c1c1c"/>
<circle cx="406.3" cy="684.1" r="2.05" fill="#1c1c1c"/>
<circle cx="406.3" cy="697.5" r="2.05" fill="#1c1c1c"/>
<rect x="401.5" y="541.7" width="689.3" height="161.2" fill="url(#ticks)" opacity=".8"/>
<rect x="401.5" y="541.1" width="689.3" height="1.1" fill="#585858"/>
<rect x="401.5" y="554.5" width="689.3" height="1.1" fill="#585858"/>
<rect x="401.5" y="568.0" width="689.3" height="1.1" fill="#585858"/>
<rect x="401.5" y="581.4" width="689.3" height="1.1" fill="#585858"/>
<rect x="401.5" y="594.8" width="689.3" height="1.1" fill="#585858"/>
<rect x="401.5" y="608.2" width="689.3" height="1.1" fill="#585858"/>
<rect x="401.5" y="621.7" width="689.3" height="1.1" fill="#585858"/>
<rect x="401.5" y="635.1" width="689.3" height="1.1" fill="#585858"/>
<rect x="401.5" y="648.5" width="689.3" height="1.1" fill="#585858"/>
<rect x="401.5" y="662.0" width="689.3" height="1.1" fill="#585858"/>
<rect x="401.5" y="675.4" width="689.3" height="1.1" fill="#585858"/>
<rect x="401.5" y="688.8" width="689.3" height="1.1" fill="#585858"/>
<rect x="401.5" y="702.3" width="689.3" height="1.1" fill="#585858"/>
<rect x="430.0" y="541.7" width="9.51" height="161.2" fill="#4a90e2" opacity=".10"/>
</svg>
<!-- playhead -->
<div class="abs" style="left:434.4px;top:541px;width:1.2px;height:182px;background:#4a8fe0;opacity:.85"></div>
<svg style="left:429.6px;top:518.6px" width="10" height="24" viewBox="0 0 10 24"><path d="M1.6 0 H8.4 Q10 0 10 1.6 V19.6 L5 23.6 L0 19.6 V1.6 Q0 0 1.6 0 Z" fill="#3b84d9"/></svg>
<!-- timeline scrollbar -->
<div class="abs" style="left:401.5px;top:723px;width:696px;height:6px;background:#5a5a5a"></div>
<div class="abs" style="left:401.8px;top:723px;width:74.2px;height:6px;background:#d3d3d3"></div>

<!-- ================= RIGHT PANEL (LIBRARY) ================= -->
<div class="abs" style="left:1097.5px;top:26px;width:202.5px;height:705px;background:#323232"></div>
<div class="abs" style="left:1097.5px;top:26px;width:1.2px;height:705px;background:#272727"></div>
<div class="abs blur" id="library" style="left:0;top:0;width:1300px;height:731px">
<div class="abs" style="left:1098.7px;top:26px;width:201.3px;height:10px;background:#2e2e2e"></div>
<svg style="left:1293.5px;top:30px" width="6" height="5" viewBox="0 0 6 5"><path d="M.2 0 L2.8 2.5 L.2 5 Z M3.4 0 L6 2.5 L3.4 5 Z" fill="#d0d0d0"/></svg>
<div class="t" style="transform:scaleX(0.898);left:1102.5px;top:37.5px;font-size:7.3px;font-weight:bold;color:#565656">Properties</div>
<div class="t b" style="transform:scaleX(0.896);left:1146px;top:37.5px;font-size:7.5px">Library</div>
<div class="t" style="transform:scaleX(0.918);left:1179px;top:37.5px;font-size:7.3px;font-weight:bold;color:#565656">Motion Presets</div>
<div class="t" style="transform:scaleX(0.815);left:1238px;top:37.5px;font-size:7.3px;font-weight:bold;color:#565656">Assets</div>
<div class="abs" style="left:1291.5px;top:39.5px;width:7px;height:6px;background:#5a5a5a"></div>
<div class="abs" style="left:1101px;top:52.2px;width:164.5px;height:14.4px;background:#292929;border:1px solid #5e5e5e;border-radius:3px"></div>
<div class="t" style="transform:scaleX(0.896);left:1107.5px;top:55.2px;font-size:8.2px;color:#e6e6e6">King Character Rigged.fla</div>
<svg style="left:1251.5px;top:56.6px" width="8" height="6" viewBox="0 0 8 6"><path d="M.8 1 L4 4.6 L7.2 1" fill="none" stroke="#ececec" stroke-width="1.4"/></svg>
<svg style="left:1270.5px;top:55.6px" width="12" height="7" viewBox="0 0 12 7"><path d="M0 3.5 H7" stroke="#d8d8d8" stroke-width="1.3"/><circle cx="8.8" cy="3.5" r="2.9" fill="#d8d8d8"/></svg>
<svg style="left:1288.5px;top:54px" width="11" height="12" viewBox="0 0 11 12"><rect x=".5" y=".5" width="7" height="8.4" rx="1" fill="#8a8a8a" stroke="#d0d0d0" stroke-width=".8"/><rect x="3.6" y="3" width="7" height="8.4" rx="1" fill="#bdbdbd" stroke="#e4e4e4" stroke-width=".8"/></svg>
<div class="abs" style="left:1098.7px;top:163px;width:201.3px;height:4.2px;background:#4c4c4c"></div>
<div class="t" style="left:1100.5px;top:171px;font-size:7.8px;color:#dcdcdc">45 items</div>
<div class="abs" style="left:1210.3px;top:168.4px;width:96px;height:14.2px;background:#1d1d1d;border:1px solid #535353;border-radius:3px"></div>
<svg style="left:1214.5px;top:170.6px" width="10" height="10" viewBox="0 0 10 10"><circle cx="4" cy="4" r="3" fill="none" stroke="#e8e8e8" stroke-width="1.2"/><path d="M6.2 6.2 L9.4 9.4" stroke="#e8e8e8" stroke-width="1.5"/></svg>
<div class="abs" style="left:1098.7px;top:184.6px;width:201.3px;height:1px;background:#2a2a2a"></div>
<div class="t" style="transform:scaleX(0.954);left:1108.7px;top:190.6px;font-size:7.2px;color:#d6d6d6">Name</div>
<svg style="left:1135.4px;top:190.4px" width="6" height="8" viewBox="0 0 6 8"><path d="M3 8 V1 M.6 3.2 L3 .6 L5.4 3.2" fill="none" stroke="#e0e0e0" stroke-width="1.1"/></svg>
<div class="abs" style="left:1255.3px;top:185px;width:1px;height:21px;background:#444"></div>
<div class="t" style="transform:scaleX(0.913);left:1266px;top:190.6px;font-size:7.2px;color:#d6d6d6">Linkage</div>
<div class="abs" style="left:1098.7px;top:206px;width:199px;height:512px;background:#2f2f2f"></div>
<div class="abs" style="left:1098.7px;top:205.5px;width:201.3px;height:1px;background:#434343"></div>
<svg style="left:1102.5px;top:212.8px" width="7" height="5" viewBox="0 0 7 5"><path d="M.6 .8 L3.5 4 L6.4 .8" fill="none" stroke="#e6e6e6" stroke-width="1.3"/></svg>
<svg style="left:1114.5px;top:211.1px" width="11" height="8.5" viewBox="0 0 11 8.5"><path d="M0 .8 Q0 0 .8 0 H3.8 L4.8 1.2 H9.2 Q10 1.2 10 2 V3 H2.4 L0 8 Z" fill="#e2e2e2"/><path d="M2.8 3.6 H11 L8.8 8.5 H.4 Z" fill="#e2e2e2"/></svg>
<div class="t" style="transform:scaleX(0.965);left:1129.5px;top:210.3px;font-size:7.7px;color:#e2e2e2;-webkit-text-stroke:.15px #e2e2e2">Duplicate Items Folder</div>
<svg style="left:1129.5px;top:227.4px" width="12" height="11" viewBox="0 0 12 11"><path d="M.8 8.4 L6.8 .8 L8.2 2.2 L5.4 8.4 Z" fill="none" stroke="#dedede" stroke-width="1" stroke-linejoin="round"/><rect x="6.2" y="4.4" width="5.2" height="5.2" fill="#dedede"/><circle cx="4.2" cy="7.8" r="2.3" fill="#323232" stroke="#dedede" stroke-width="1"/></svg>
<div class="t" style="transform:scaleX(0.965);left:1145.3px;top:228.0px;font-size:7.7px;color:#e2e2e2;-webkit-text-stroke:.15px #e2e2e2">K Army</div>
<svg style="left:1129.5px;top:245.0px" width="12" height="11" viewBox="0 0 12 11"><path d="M.8 8.4 L6.8 .8 L8.2 2.2 L5.4 8.4 Z" fill="none" stroke="#dedede" stroke-width="1" stroke-linejoin="round"/><rect x="6.2" y="4.4" width="5.2" height="5.2" fill="#dedede"/><circle cx="4.2" cy="7.8" r="2.3" fill="#323232" stroke="#dedede" stroke-width="1"/></svg>
<div class="t" style="transform:scaleX(0.965);left:1145.3px;top:245.6px;font-size:7.7px;color:#e2e2e2;-webkit-text-stroke:.15px #e2e2e2">K Back Arm</div>
<svg style="left:1113.8px;top:262.7px" width="12" height="11" viewBox="0 0 12 11"><path d="M.8 8.4 L6.8 .8 L8.2 2.2 L5.4 8.4 Z" fill="none" stroke="#dedede" stroke-width="1" stroke-linejoin="round"/><rect x="6.2" y="4.4" width="5.2" height="5.2" fill="#dedede"/><circle cx="4.2" cy="7.8" r="2.3" fill="#323232" stroke="#dedede" stroke-width="1"/></svg>
<div class="t" style="transform:scaleX(0.965);left:1129.5px;top:263.3px;font-size:7.7px;color:#e2e2e2;-webkit-text-stroke:.15px #e2e2e2">Gold Circ</div>
<svg style="left:1113.8px;top:280.3px" width="12" height="11" viewBox="0 0 12 11"><path d="M.8 8.4 L6.8 .8 L8.2 2.2 L5.4 8.4 Z" fill="none" stroke="#dedede" stroke-width="1" stroke-linejoin="round"/><rect x="6.2" y="4.4" width="5.2" height="5.2" fill="#dedede"/><circle cx="4.2" cy="7.8" r="2.3" fill="#323232" stroke="#dedede" stroke-width="1"/></svg>
<div class="t" style="transform:scaleX(0.965);left:1129.5px;top:280.9px;font-size:7.7px;color:#e2e2e2;-webkit-text-stroke:.15px #e2e2e2">K B Kada</div>
<svg style="left:1113.8px;top:298.0px" width="12" height="11" viewBox="0 0 12 11"><path d="M.8 8.4 L6.8 .8 L8.2 2.2 L5.4 8.4 Z" fill="none" stroke="#dedede" stroke-width="1" stroke-linejoin="round"/><rect x="6.2" y="4.4" width="5.2" height="5.2" fill="#dedede"/><circle cx="4.2" cy="7.8" r="2.3" fill="#323232" stroke="#dedede" stroke-width="1"/></svg>
<div class="t" style="transform:scaleX(0.965);left:1129.5px;top:298.6px;font-size:7.7px;color:#e2e2e2;-webkit-text-stroke:.15px #e2e2e2">K B P</div>
<svg style="left:1113.8px;top:315.7px" width="12" height="11" viewBox="0 0 12 11"><path d="M.8 8.4 L6.8 .8 L8.2 2.2 L5.4 8.4 Z" fill="none" stroke="#dedede" stroke-width="1" stroke-linejoin="round"/><rect x="6.2" y="4.4" width="5.2" height="5.2" fill="#dedede"/><circle cx="4.2" cy="7.8" r="2.3" fill="#323232" stroke="#dedede" stroke-width="1"/></svg>
<div class="t" style="transform:scaleX(0.965);left:1129.5px;top:316.3px;font-size:7.7px;color:#e2e2e2;-webkit-text-stroke:.15px #e2e2e2">K Back Blue dress</div>
<svg style="left:1113.8px;top:333.3px" width="12" height="11" viewBox="0 0 12 11"><path d="M.8 8.4 L6.8 .8 L8.2 2.2 L5.4 8.4 Z" fill="none" stroke="#dedede" stroke-width="1" stroke-linejoin="round"/><rect x="6.2" y="4.4" width="5.2" height="5.2" fill="#dedede"/><circle cx="4.2" cy="7.8" r="2.3" fill="#323232" stroke="#dedede" stroke-width="1"/></svg>
<div class="t" style="transform:scaleX(0.965);left:1129.5px;top:333.9px;font-size:7.7px;color:#e2e2e2;-webkit-text-stroke:.15px #e2e2e2">K Back D Hand</div>
<svg style="left:1113.8px;top:351.0px" width="12" height="11" viewBox="0 0 12 11"><path d="M.8 8.4 L6.8 .8 L8.2 2.2 L5.4 8.4 Z" fill="none" stroke="#dedede" stroke-width="1" stroke-linejoin="round"/><rect x="6.2" y="4.4" width="5.2" height="5.2" fill="#dedede"/><circle cx="4.2" cy="7.8" r="2.3" fill="#323232" stroke="#dedede" stroke-width="1"/></svg>
<div class="t" style="transform:scaleX(0.965);left:1129.5px;top:351.6px;font-size:7.7px;color:#e2e2e2;-webkit-text-stroke:.15px #e2e2e2">K Back D leg</div>
<svg style="left:1113.8px;top:368.6px" width="12" height="11" viewBox="0 0 12 11"><path d="M.8 8.4 L6.8 .8 L8.2 2.2 L5.4 8.4 Z" fill="none" stroke="#dedede" stroke-width="1" stroke-linejoin="round"/><rect x="6.2" y="4.4" width="5.2" height="5.2" fill="#dedede"/><circle cx="4.2" cy="7.8" r="2.3" fill="#323232" stroke="#dedede" stroke-width="1"/></svg>
<div class="t" style="transform:scaleX(0.965);left:1129.5px;top:369.2px;font-size:7.7px;color:#e2e2e2;-webkit-text-stroke:.15px #e2e2e2">K Back Eye Brow</div>
<svg style="left:1113.8px;top:386.3px" width="12" height="11" viewBox="0 0 12 11"><path d="M.8 8.4 L6.8 .8 L8.2 2.2 L5.4 8.4 Z" fill="none" stroke="#dedede" stroke-width="1" stroke-linejoin="round"/><rect x="6.2" y="4.4" width="5.2" height="5.2" fill="#dedede"/><circle cx="4.2" cy="7.8" r="2.3" fill="#323232" stroke="#dedede" stroke-width="1"/></svg>
<div class="t" style="transform:scaleX(0.965);left:1129.5px;top:386.9px;font-size:7.7px;color:#e2e2e2;-webkit-text-stroke:.15px #e2e2e2">K Back Eye Brow In</div>
<svg style="left:1113.8px;top:404.0px" width="12" height="11" viewBox="0 0 12 11"><path d="M.8 8.4 L6.8 .8 L8.2 2.2 L5.4 8.4 Z" fill="none" stroke="#dedede" stroke-width="1" stroke-linejoin="round"/><rect x="6.2" y="4.4" width="5.2" height="5.2" fill="#dedede"/><circle cx="4.2" cy="7.8" r="2.3" fill="#323232" stroke="#dedede" stroke-width="1"/></svg>
<div class="t" style="transform:scaleX(0.965);left:1129.5px;top:404.6px;font-size:7.7px;color:#e2e2e2;-webkit-text-stroke:.15px #e2e2e2">K Back Foot</div>
<svg style="left:1113.8px;top:421.6px" width="12" height="11" viewBox="0 0 12 11"><path d="M.8 8.4 L6.8 .8 L8.2 2.2 L5.4 8.4 Z" fill="none" stroke="#dedede" stroke-width="1" stroke-linejoin="round"/><rect x="6.2" y="4.4" width="5.2" height="5.2" fill="#dedede"/><circle cx="4.2" cy="7.8" r="2.3" fill="#323232" stroke="#dedede" stroke-width="1"/></svg>
<div class="t" style="transform:scaleX(0.965);left:1129.5px;top:422.2px;font-size:7.7px;color:#e2e2e2;-webkit-text-stroke:.15px #e2e2e2">K Back hair</div>
<svg style="left:1113.8px;top:439.3px" width="12" height="11" viewBox="0 0 12 11"><path d="M.8 8.4 L6.8 .8 L8.2 2.2 L5.4 8.4 Z" fill="none" stroke="#dedede" stroke-width="1" stroke-linejoin="round"/><rect x="6.2" y="4.4" width="5.2" height="5.2" fill="#dedede"/><circle cx="4.2" cy="7.8" r="2.3" fill="#323232" stroke="#dedede" stroke-width="1"/></svg>
<div class="t" style="transform:scaleX(0.965);left:1129.5px;top:439.9px;font-size:7.7px;color:#e2e2e2;-webkit-text-stroke:.15px #e2e2e2">K Back Hand</div>
<svg style="left:1113.8px;top:456.9px" width="12" height="11" viewBox="0 0 12 11"><path d="M.8 8.4 L6.8 .8 L8.2 2.2 L5.4 8.4 Z" fill="none" stroke="#dedede" stroke-width="1" stroke-linejoin="round"/><rect x="6.2" y="4.4" width="5.2" height="5.2" fill="#dedede"/><circle cx="4.2" cy="7.8" r="2.3" fill="#323232" stroke="#dedede" stroke-width="1"/></svg>
<div class="t" style="transform:scaleX(0.965);left:1129.5px;top:457.5px;font-size:7.7px;color:#e2e2e2;-webkit-text-stroke:.15px #e2e2e2">K Back Leg</div>
<svg style="left:1113.8px;top:474.6px" width="12" height="11" viewBox="0 0 12 11"><path d="M.8 8.4 L6.8 .8 L8.2 2.2 L5.4 8.4 Z" fill="none" stroke="#dedede" stroke-width="1" stroke-linejoin="round"/><rect x="6.2" y="4.4" width="5.2" height="5.2" fill="#dedede"/><circle cx="4.2" cy="7.8" r="2.3" fill="#323232" stroke="#dedede" stroke-width="1"/></svg>
<div class="t" style="transform:scaleX(0.965);left:1129.5px;top:475.2px;font-size:7.7px;color:#e2e2e2;-webkit-text-stroke:.15px #e2e2e2">K Back Taj</div>
<svg style="left:1113.8px;top:492.3px" width="12" height="11" viewBox="0 0 12 11"><path d="M.8 8.4 L6.8 .8 L8.2 2.2 L5.4 8.4 Z" fill="none" stroke="#dedede" stroke-width="1" stroke-linejoin="round"/><rect x="6.2" y="4.4" width="5.2" height="5.2" fill="#dedede"/><circle cx="4.2" cy="7.8" r="2.3" fill="#323232" stroke="#dedede" stroke-width="1"/></svg>
<div class="t" style="transform:scaleX(0.965);left:1129.5px;top:492.9px;font-size:7.7px;color:#e2e2e2;-webkit-text-stroke:.15px #e2e2e2">K eyer</div>
<svg style="left:1113.8px;top:509.9px" width="12" height="11" viewBox="0 0 12 11"><path d="M.8 8.4 L6.8 .8 L8.2 2.2 L5.4 8.4 Z" fill="none" stroke="#dedede" stroke-width="1" stroke-linejoin="round"/><rect x="6.2" y="4.4" width="5.2" height="5.2" fill="#dedede"/><circle cx="4.2" cy="7.8" r="2.3" fill="#323232" stroke="#dedede" stroke-width="1"/></svg>
<div class="t" style="transform:scaleX(0.965);left:1129.5px;top:510.5px;font-size:7.7px;color:#e2e2e2;-webkit-text-stroke:.15px #e2e2e2">K F Kada</div>
<svg style="left:1113.8px;top:527.6px" width="12" height="11" viewBox="0 0 12 11"><path d="M.8 8.4 L6.8 .8 L8.2 2.2 L5.4 8.4 Z" fill="none" stroke="#dedede" stroke-width="1" stroke-linejoin="round"/><rect x="6.2" y="4.4" width="5.2" height="5.2" fill="#dedede"/><circle cx="4.2" cy="7.8" r="2.3" fill="#323232" stroke="#dedede" stroke-width="1"/></svg>
<div class="t" style="transform:scaleX(0.965);left:1129.5px;top:528.2px;font-size:7.7px;color:#e2e2e2;-webkit-text-stroke:.15px #e2e2e2">K F Part</div>
<svg style="left:1113.8px;top:545.2px" width="12" height="11" viewBox="0 0 12 11"><path d="M.8 8.4 L6.8 .8 L8.2 2.2 L5.4 8.4 Z" fill="none" stroke="#dedede" stroke-width="1" stroke-linejoin="round"/><rect x="6.2" y="4.4" width="5.2" height="5.2" fill="#dedede"/><circle cx="4.2" cy="7.8" r="2.3" fill="#323232" stroke="#dedede" stroke-width="1"/></svg>
<div class="t" style="transform:scaleX(0.965);left:1129.5px;top:545.8px;font-size:7.7px;color:#e2e2e2;-webkit-text-stroke:.15px #e2e2e2">K Foot</div>
<svg style="left:1113.8px;top:562.9px" width="12" height="11" viewBox="0 0 12 11"><path d="M.8 8.4 L6.8 .8 L8.2 2.2 L5.4 8.4 Z" fill="none" stroke="#dedede" stroke-width="1" stroke-linejoin="round"/><rect x="6.2" y="4.4" width="5.2" height="5.2" fill="#dedede"/><circle cx="4.2" cy="7.8" r="2.3" fill="#323232" stroke="#dedede" stroke-width="1"/></svg>
<div class="t" style="transform:scaleX(0.965);left:1129.5px;top:563.5px;font-size:7.7px;color:#e2e2e2;-webkit-text-stroke:.15px #e2e2e2">K Front Blue dress</div>
<svg style="left:1113.8px;top:580.6px" width="12" height="11" viewBox="0 0 12 11"><path d="M.8 8.4 L6.8 .8 L8.2 2.2 L5.4 8.4 Z" fill="none" stroke="#dedede" stroke-width="1" stroke-linejoin="round"/><rect x="6.2" y="4.4" width="5.2" height="5.2" fill="#dedede"/><circle cx="4.2" cy="7.8" r="2.3" fill="#323232" stroke="#dedede" stroke-width="1"/></svg>
<div class="t" style="transform:scaleX(0.965);left:1129.5px;top:581.2px;font-size:7.7px;color:#e2e2e2;-webkit-text-stroke:.15px #e2e2e2">K Front D hand</div>
<svg style="left:1113.8px;top:598.2px" width="12" height="11" viewBox="0 0 12 11"><path d="M.8 8.4 L6.8 .8 L8.2 2.2 L5.4 8.4 Z" fill="none" stroke="#dedede" stroke-width="1" stroke-linejoin="round"/><rect x="6.2" y="4.4" width="5.2" height="5.2" fill="#dedede"/><circle cx="4.2" cy="7.8" r="2.3" fill="#323232" stroke="#dedede" stroke-width="1"/></svg>
<div class="t" style="transform:scaleX(0.965);left:1129.5px;top:598.8px;font-size:7.7px;color:#e2e2e2;-webkit-text-stroke:.15px #e2e2e2">K Front D leg</div>
<svg style="left:1113.8px;top:615.9px" width="12" height="11" viewBox="0 0 12 11"><path d="M.8 8.4 L6.8 .8 L8.2 2.2 L5.4 8.4 Z" fill="none" stroke="#dedede" stroke-width="1" stroke-linejoin="round"/><rect x="6.2" y="4.4" width="5.2" height="5.2" fill="#dedede"/><circle cx="4.2" cy="7.8" r="2.3" fill="#323232" stroke="#dedede" stroke-width="1"/></svg>
<div class="t" style="transform:scaleX(0.965);left:1129.5px;top:616.5px;font-size:7.7px;color:#e2e2e2;-webkit-text-stroke:.15px #e2e2e2">K Front Eye Ball</div>
<svg style="left:1113.8px;top:633.5px" width="12" height="11" viewBox="0 0 12 11"><path d="M.8 8.4 L6.8 .8 L8.2 2.2 L5.4 8.4 Z" fill="none" stroke="#dedede" stroke-width="1" stroke-linejoin="round"/><rect x="6.2" y="4.4" width="5.2" height="5.2" fill="#dedede"/><circle cx="4.2" cy="7.8" r="2.3" fill="#323232" stroke="#dedede" stroke-width="1"/></svg>
<div class="t" style="transform:scaleX(0.965);left:1129.5px;top:634.1px;font-size:7.7px;color:#e2e2e2;-webkit-text-stroke:.15px #e2e2e2">K Front Eye Ball In</div>
<svg style="left:1113.8px;top:651.2px" width="12" height="11" viewBox="0 0 12 11"><path d="M.8 8.4 L6.8 .8 L8.2 2.2 L5.4 8.4 Z" fill="none" stroke="#dedede" stroke-width="1" stroke-linejoin="round"/><rect x="6.2" y="4.4" width="5.2" height="5.2" fill="#dedede"/><circle cx="4.2" cy="7.8" r="2.3" fill="#323232" stroke="#dedede" stroke-width="1"/></svg>
<div class="t" style="transform:scaleX(0.965);left:1129.5px;top:651.8px;font-size:7.7px;color:#e2e2e2;-webkit-text-stroke:.15px #e2e2e2">K Front Eye Brow</div>
<svg style="left:1113.8px;top:668.9px" width="12" height="11" viewBox="0 0 12 11"><path d="M.8 8.4 L6.8 .8 L8.2 2.2 L5.4 8.4 Z" fill="none" stroke="#dedede" stroke-width="1" stroke-linejoin="round"/><rect x="6.2" y="4.4" width="5.2" height="5.2" fill="#dedede"/><circle cx="4.2" cy="7.8" r="2.3" fill="#323232" stroke="#dedede" stroke-width="1"/></svg>
<div class="t" style="transform:scaleX(0.965);left:1129.5px;top:669.5px;font-size:7.7px;color:#e2e2e2;-webkit-text-stroke:.15px #e2e2e2">K Front Eye Brow In</div>
<svg style="left:1113.8px;top:686.5px" width="12" height="11" viewBox="0 0 12 11"><path d="M.8 8.4 L6.8 .8 L8.2 2.2 L5.4 8.4 Z" fill="none" stroke="#dedede" stroke-width="1" stroke-linejoin="round"/><rect x="6.2" y="4.4" width="5.2" height="5.2" fill="#dedede"/><circle cx="4.2" cy="7.8" r="2.3" fill="#323232" stroke="#dedede" stroke-width="1"/></svg>
<div class="t" style="transform:scaleX(0.965);left:1129.5px;top:687.1px;font-size:7.7px;color:#e2e2e2;-webkit-text-stroke:.15px #e2e2e2">K Front Hand</div>
<svg style="left:1113.8px;top:704.2px" width="12" height="11" viewBox="0 0 12 11"><path d="M.8 8.4 L6.8 .8 L8.2 2.2 L5.4 8.4 Z" fill="none" stroke="#dedede" stroke-width="1" stroke-linejoin="round"/><rect x="6.2" y="4.4" width="5.2" height="5.2" fill="#dedede"/><circle cx="4.2" cy="7.8" r="2.3" fill="#323232" stroke="#dedede" stroke-width="1"/></svg>
<div class="t" style="transform:scaleX(0.965);left:1129.5px;top:704.8px;font-size:7.7px;color:#e2e2e2;-webkit-text-stroke:.15px #e2e2e2">K Front leg</div>
<!-- bottom icons -->
<svg style="left:1099.5px;top:718.5px" width="8" height="8" viewBox="0 0 8 8"><rect x=".5" y=".5" width="7" height="7" fill="none" stroke="#dcdcdc" stroke-width=".9"/><path d="M4 2.2 V5.8 M2.2 4 H5.8" stroke="#dcdcdc" stroke-width=".9"/></svg>
<svg style="left:1109.5px;top:718.8px" width="9" height="7.5" viewBox="0 0 9 7.5"><path d="M0 .8 Q0 0 .8 0 H3.2 L4.2 1.2 H8.2 Q9 1.2 9 2 V6.7 Q9 7.5 8.2 7.5 H.8 Q0 7.5 0 6.7 Z" fill="#dcdcdc"/></svg>
<svg style="left:1120.6px;top:718.2px" width="9" height="9" viewBox="0 0 9 9"><circle cx="4.5" cy="4.5" r="4.4" fill="#dcdcdc"/><rect x="3.9" y="3.8" width="1.3" height="3.4" fill="#2f2f2f"/><rect x="3.9" y="1.8" width="1.3" height="1.3" fill="#2f2f2f"/></svg>
<svg style="left:1132.6px;top:718px" width="8" height="9.5" viewBox="0 0 8 9.5"><rect x="0" y="1.2" width="8" height="1.1" fill="#c8c8c8"/><rect x="2.6" y="0" width="2.8" height="1.3" fill="#c8c8c8"/><path d="M.8 3 H7.2 L6.6 9.5 H1.4 Z" fill="none" stroke="#c8c8c8" stroke-width=".9"/><path d="M3 4.2 V8.4 M5 4.2 V8.4" stroke="#c8c8c8" stroke-width=".7"/></svg>
<div class="abs" style="left:1142px;top:721.6px;width:158px;height:6.4px;background:#474747"></div>
<div class="abs" style="left:1142px;top:721.6px;width:78.6px;height:6.4px;background:#d3d3d3"></div>
<div class="abs" style="left:1297.8px;top:206px;width:2.2px;height:515px;background:#4a4a4a"></div>
<div class="abs" style="left:1298px;top:206.5px;width:2px;height:335px;background:#dcdcdc"></div>
</div>

<!-- ================= WATERMARK TILES ================= -->
<svg id="wm" role="img" aria-label="Ayug watermark" style="left:0;top:0;pointer-events:none" width="1300" height="731" viewBox="0 0 1300 731"><title>Ayug</title><defs><mask id="amHole" maskUnits="userSpaceOnUse" x="-10" y="-10" width="110" height="100"><rect x="-10" y="-10" width="110" height="100" fill="#fff"/><rect x="29" y="16.3" width="28.2" height="30.7" rx="3.5" fill="#000"/></mask></defs><g opacity="0.085" fill="#000"><g transform="translate(-64.0 192.0) rotate(-42) scale(0.58) translate(-43.1 -31.6)"><g fill="#000" mask="url(#amHole)" ><rect x="10.2" y="0" width="69.3" height="60" rx="18" ry="18"/><rect x="10.2" y="30" width="69.3" height="25"/><rect x="0" y="47" width="89.8" height="16.3" rx="4.5"/><rect x="10.2" y="55" width="18.8" height="22.8" rx="3.5"/><rect x="57.2" y="55" width="22.3" height="22.8" rx="3.5"/></g><g transform="translate(96.6 -18) rotate(35)"><path d="M-7 -8 L7 -8 L7.5 -2 Q6 5 0 13 Q-6 5 -7.5 -2 Z"/><rect x="-7" y="-12.5" width="14" height="3.6"/></g><text y="63" font-family="Liberation Sans, sans-serif" font-weight="bold" font-size="46" stroke="#000" stroke-width="3.4" stroke-linejoin="round"><tspan x="94">y</tspan><tspan x="126">u</tspan><tspan x="159">g</tspan></text></g>
<g transform="translate(-44.0 393.0) rotate(-42) scale(0.58) translate(-43.1 -31.6)"><g fill="#000" mask="url(#amHole)" ><rect x="10.2" y="0" width="69.3" height="60" rx="18" ry="18"/><rect x="10.2" y="30" width="69.3" height="25"/><rect x="0" y="47" width="89.8" height="16.3" rx="4.5"/><rect x="10.2" y="55" width="18.8" height="22.8" rx="3.5"/><rect x="57.2" y="55" width="22.3" height="22.8" rx="3.5"/></g><g transform="translate(96.6 -18) rotate(35)"><path d="M-7 -8 L7 -8 L7.5 -2 Q6 5 0 13 Q-6 5 -7.5 -2 Z"/><rect x="-7" y="-12.5" width="14" height="3.6"/></g><text y="63" font-family="Liberation Sans, sans-serif" font-weight="bold" font-size="46" stroke="#000" stroke-width="3.4" stroke-linejoin="round"><tspan x="94">y</tspan><tspan x="126">u</tspan><tspan x="159">g</tspan></text></g>
<g transform="translate(-24.0 594.0) rotate(-42) scale(0.58) translate(-43.1 -31.6)"><g fill="#000" mask="url(#amHole)" ><rect x="10.2" y="0" width="69.3" height="60" rx="18" ry="18"/><rect x="10.2" y="30" width="69.3" height="25"/><rect x="0" y="47" width="89.8" height="16.3" rx="4.5"/><rect x="10.2" y="55" width="18.8" height="22.8" rx="3.5"/><rect x="57.2" y="55" width="22.3" height="22.8" rx="3.5"/></g><g transform="translate(96.6 -18) rotate(35)"><path d="M-7 -8 L7 -8 L7.5 -2 Q6 5 0 13 Q-6 5 -7.5 -2 Z"/><rect x="-7" y="-12.5" width="14" height="3.6"/></g><text y="63" font-family="Liberation Sans, sans-serif" font-weight="bold" font-size="46" stroke="#000" stroke-width="3.4" stroke-linejoin="round"><tspan x="94">y</tspan><tspan x="126">u</tspan><tspan x="159">g</tspan></text></g>
<g transform="translate(-4.0 795.0) rotate(-42) scale(0.58) translate(-43.1 -31.6)"><g fill="#000" mask="url(#amHole)" ><rect x="10.2" y="0" width="69.3" height="60" rx="18" ry="18"/><rect x="10.2" y="30" width="69.3" height="25"/><rect x="0" y="47" width="89.8" height="16.3" rx="4.5"/><rect x="10.2" y="55" width="18.8" height="22.8" rx="3.5"/><rect x="57.2" y="55" width="22.3" height="22.8" rx="3.5"/></g><g transform="translate(96.6 -18) rotate(35)"><path d="M-7 -8 L7 -8 L7.5 -2 Q6 5 0 13 Q-6 5 -7.5 -2 Z"/><rect x="-7" y="-12.5" width="14" height="3.6"/></g><text y="63" font-family="Liberation Sans, sans-serif" font-weight="bold" font-size="46" stroke="#000" stroke-width="3.4" stroke-linejoin="round"><tspan x="94">y</tspan><tspan x="126">u</tspan><tspan x="159">g</tspan></text></g>
<g transform="translate(116.5 6.5) rotate(-42) scale(0.58) translate(-43.1 -31.6)"><g fill="#000" mask="url(#amHole)" ><rect x="10.2" y="0" width="69.3" height="60" rx="18" ry="18"/><rect x="10.2" y="30" width="69.3" height="25"/><rect x="0" y="47" width="89.8" height="16.3" rx="4.5"/><rect x="10.2" y="55" width="18.8" height="22.8" rx="3.5"/><rect x="57.2" y="55" width="22.3" height="22.8" rx="3.5"/></g><g transform="translate(96.6 -18) rotate(35)"><path d="M-7 -8 L7 -8 L7.5 -2 Q6 5 0 13 Q-6 5 -7.5 -2 Z"/><rect x="-7" y="-12.5" width="14" height="3.6"/></g><text y="63" font-family="Liberation Sans, sans-serif" font-weight="bold" font-size="46" stroke="#000" stroke-width="3.4" stroke-linejoin="round"><tspan x="94">y</tspan><tspan x="126">u</tspan><tspan x="159">g</tspan></text></g>
<g transform="translate(136.5 207.5) rotate(-42) scale(0.58) translate(-43.1 -31.6)"><g fill="#000" mask="url(#amHole)" ><rect x="10.2" y="0" width="69.3" height="60" rx="18" ry="18"/><rect x="10.2" y="30" width="69.3" height="25"/><rect x="0" y="47" width="89.8" height="16.3" rx="4.5"/><rect x="10.2" y="55" width="18.8" height="22.8" rx="3.5"/><rect x="57.2" y="55" width="22.3" height="22.8" rx="3.5"/></g><g transform="translate(96.6 -18) rotate(35)"><path d="M-7 -8 L7 -8 L7.5 -2 Q6 5 0 13 Q-6 5 -7.5 -2 Z"/><rect x="-7" y="-12.5" width="14" height="3.6"/></g><text y="63" font-family="Liberation Sans, sans-serif" font-weight="bold" font-size="46" stroke="#000" stroke-width="3.4" stroke-linejoin="round"><tspan x="94">y</tspan><tspan x="126">u</tspan><tspan x="159">g</tspan></text></g>
<g transform="translate(156.5 408.5) rotate(-42) scale(0.58) translate(-43.1 -31.6)"><g fill="#000" mask="url(#amHole)" ><rect x="10.2" y="0" width="69.3" height="60" rx="18" ry="18"/><rect x="10.2" y="30" width="69.3" height="25"/><rect x="0" y="47" width="89.8" height="16.3" rx="4.5"/><rect x="10.2" y="55" width="18.8" height="22.8" rx="3.5"/><rect x="57.2" y="55" width="22.3" height="22.8" rx="3.5"/></g><g transform="translate(96.6 -18) rotate(35)"><path d="M-7 -8 L7 -8 L7.5 -2 Q6 5 0 13 Q-6 5 -7.5 -2 Z"/><rect x="-7" y="-12.5" width="14" height="3.6"/></g><text y="63" font-family="Liberation Sans, sans-serif" font-weight="bold" font-size="46" stroke="#000" stroke-width="3.4" stroke-linejoin="round"><tspan x="94">y</tspan><tspan x="126">u</tspan><tspan x="159">g</tspan></text></g>
<g transform="translate(176.5 609.5) rotate(-42) scale(0.58) translate(-43.1 -31.6)"><g fill="#000" mask="url(#amHole)" ><rect x="10.2" y="0" width="69.3" height="60" rx="18" ry="18"/><rect x="10.2" y="30" width="69.3" height="25"/><rect x="0" y="47" width="89.8" height="16.3" rx="4.5"/><rect x="10.2" y="55" width="18.8" height="22.8" rx="3.5"/><rect x="57.2" y="55" width="22.3" height="22.8" rx="3.5"/></g><g transform="translate(96.6 -18) rotate(35)"><path d="M-7 -8 L7 -8 L7.5 -2 Q6 5 0 13 Q-6 5 -7.5 -2 Z"/><rect x="-7" y="-12.5" width="14" height="3.6"/></g><text y="63" font-family="Liberation Sans, sans-serif" font-weight="bold" font-size="46" stroke="#000" stroke-width="3.4" stroke-linejoin="round"><tspan x="94">y</tspan><tspan x="126">u</tspan><tspan x="159">g</tspan></text></g>
<g transform="translate(317.0 22.0) rotate(-42) scale(0.58) translate(-43.1 -31.6)"><g fill="#000" mask="url(#amHole)" ><rect x="10.2" y="0" width="69.3" height="60" rx="18" ry="18"/><rect x="10.2" y="30" width="69.3" height="25"/><rect x="0" y="47" width="89.8" height="16.3" rx="4.5"/><rect x="10.2" y="55" width="18.8" height="22.8" rx="3.5"/><rect x="57.2" y="55" width="22.3" height="22.8" rx="3.5"/></g><g transform="translate(96.6 -18) rotate(35)"><path d="M-7 -8 L7 -8 L7.5 -2 Q6 5 0 13 Q-6 5 -7.5 -2 Z"/><rect x="-7" y="-12.5" width="14" height="3.6"/></g><text y="63" font-family="Liberation Sans, sans-serif" font-weight="bold" font-size="46" stroke="#000" stroke-width="3.4" stroke-linejoin="round"><tspan x="94">y</tspan><tspan x="126">u</tspan><tspan x="159">g</tspan></text></g>
<g transform="translate(337.0 223.0) rotate(-42) scale(0.58) translate(-43.1 -31.6)"><g fill="#000" mask="url(#amHole)" ><rect x="10.2" y="0" width="69.3" height="60" rx="18" ry="18"/><rect x="10.2" y="30" width="69.3" height="25"/><rect x="0" y="47" width="89.8" height="16.3" rx="4.5"/><rect x="10.2" y="55" width="18.8" height="22.8" rx="3.5"/><rect x="57.2" y="55" width="22.3" height="22.8" rx="3.5"/></g><g transform="translate(96.6 -18) rotate(35)"><path d="M-7 -8 L7 -8 L7.5 -2 Q6 5 0 13 Q-6 5 -7.5 -2 Z"/><rect x="-7" y="-12.5" width="14" height="3.6"/></g><text y="63" font-family="Liberation Sans, sans-serif" font-weight="bold" font-size="46" stroke="#000" stroke-width="3.4" stroke-linejoin="round"><tspan x="94">y</tspan><tspan x="126">u</tspan><tspan x="159">g</tspan></text></g>
<g transform="translate(357.0 424.0) rotate(-42) scale(0.58) translate(-43.1 -31.6)"><g fill="#000" mask="url(#amHole)" ><rect x="10.2" y="0" width="69.3" height="60" rx="18" ry="18"/><rect x="10.2" y="30" width="69.3" height="25"/><rect x="0" y="47" width="89.8" height="16.3" rx="4.5"/><rect x="10.2" y="55" width="18.8" height="22.8" rx="3.5"/><rect x="57.2" y="55" width="22.3" height="22.8" rx="3.5"/></g><g transform="translate(96.6 -18) rotate(35)"><path d="M-7 -8 L7 -8 L7.5 -2 Q6 5 0 13 Q-6 5 -7.5 -2 Z"/><rect x="-7" y="-12.5" width="14" height="3.6"/></g><text y="63" font-family="Liberation Sans, sans-serif" font-weight="bold" font-size="46" stroke="#000" stroke-width="3.4" stroke-linejoin="round"><tspan x="94">y</tspan><tspan x="126">u</tspan><tspan x="159">g</tspan></text></g>
<g transform="translate(377.0 625.0) rotate(-42) scale(0.58) translate(-43.1 -31.6)"><g fill="#000" mask="url(#amHole)" ><rect x="10.2" y="0" width="69.3" height="60" rx="18" ry="18"/><rect x="10.2" y="30" width="69.3" height="25"/><rect x="0" y="47" width="89.8" height="16.3" rx="4.5"/><rect x="10.2" y="55" width="18.8" height="22.8" rx="3.5"/><rect x="57.2" y="55" width="22.3" height="22.8" rx="3.5"/></g><g transform="translate(96.6 -18) rotate(35)"><path d="M-7 -8 L7 -8 L7.5 -2 Q6 5 0 13 Q-6 5 -7.5 -2 Z"/><rect x="-7" y="-12.5" width="14" height="3.6"/></g><text y="63" font-family="Liberation Sans, sans-serif" font-weight="bold" font-size="46" stroke="#000" stroke-width="3.4" stroke-linejoin="round"><tspan x="94">y</tspan><tspan x="126">u</tspan><tspan x="159">g</tspan></text></g>
<g transform="translate(517.5 37.5) rotate(-42) scale(0.58) translate(-43.1 -31.6)"><g fill="#000" mask="url(#amHole)" ><rect x="10.2" y="0" width="69.3" height="60" rx="18" ry="18"/><rect x="10.2" y="30" width="69.3" height="25"/><rect x="0" y="47" width="89.8" height="16.3" rx="4.5"/><rect x="10.2" y="55" width="18.8" height="22.8" rx="3.5"/><rect x="57.2" y="55" width="22.3" height="22.8" rx="3.5"/></g><g transform="translate(96.6 -18) rotate(35)"><path d="M-7 -8 L7 -8 L7.5 -2 Q6 5 0 13 Q-6 5 -7.5 -2 Z"/><rect x="-7" y="-12.5" width="14" height="3.6"/></g><text y="63" font-family="Liberation Sans, sans-serif" font-weight="bold" font-size="46" stroke="#000" stroke-width="3.4" stroke-linejoin="round"><tspan x="94">y</tspan><tspan x="126">u</tspan><tspan x="159">g</tspan></text></g>
<g transform="translate(537.5 238.5) rotate(-42) scale(0.58) translate(-43.1 -31.6)"><g fill="#000" mask="url(#amHole)" ><rect x="10.2" y="0" width="69.3" height="60" rx="18" ry="18"/><rect x="10.2" y="30" width="69.3" height="25"/><rect x="0" y="47" width="89.8" height="16.3" rx="4.5"/><rect x="10.2" y="55" width="18.8" height="22.8" rx="3.5"/><rect x="57.2" y="55" width="22.3" height="22.8" rx="3.5"/></g><g transform="translate(96.6 -18) rotate(35)"><path d="M-7 -8 L7 -8 L7.5 -2 Q6 5 0 13 Q-6 5 -7.5 -2 Z"/><rect x="-7" y="-12.5" width="14" height="3.6"/></g><text y="63" font-family="Liberation Sans, sans-serif" font-weight="bold" font-size="46" stroke="#000" stroke-width="3.4" stroke-linejoin="round"><tspan x="94">y</tspan><tspan x="126">u</tspan><tspan x="159">g</tspan></text></g>
<g transform="translate(557.5 439.5) rotate(-42) scale(0.58) translate(-43.1 -31.6)"><g fill="#000" mask="url(#amHole)" ><rect x="10.2" y="0" width="69.3" height="60" rx="18" ry="18"/><rect x="10.2" y="30" width="69.3" height="25"/><rect x="0" y="47" width="89.8" height="16.3" rx="4.5"/><rect x="10.2" y="55" width="18.8" height="22.8" rx="3.5"/><rect x="57.2" y="55" width="22.3" height="22.8" rx="3.5"/></g><g transform="translate(96.6 -18) rotate(35)"><path d="M-7 -8 L7 -8 L7.5 -2 Q6 5 0 13 Q-6 5 -7.5 -2 Z"/><rect x="-7" y="-12.5" width="14" height="3.6"/></g><text y="63" font-family="Liberation Sans, sans-serif" font-weight="bold" font-size="46" stroke="#000" stroke-width="3.4" stroke-linejoin="round"><tspan x="94">y</tspan><tspan x="126">u</tspan><tspan x="159">g</tspan></text></g>
<g transform="translate(577.5 640.5) rotate(-42) scale(0.58) translate(-43.1 -31.6)"><g fill="#000" mask="url(#amHole)" ><rect x="10.2" y="0" width="69.3" height="60" rx="18" ry="18"/><rect x="10.2" y="30" width="69.3" height="25"/><rect x="0" y="47" width="89.8" height="16.3" rx="4.5"/><rect x="10.2" y="55" width="18.8" height="22.8" rx="3.5"/><rect x="57.2" y="55" width="22.3" height="22.8" rx="3.5"/></g><g transform="translate(96.6 -18) rotate(35)"><path d="M-7 -8 L7 -8 L7.5 -2 Q6 5 0 13 Q-6 5 -7.5 -2 Z"/><rect x="-7" y="-12.5" width="14" height="3.6"/></g><text y="63" font-family="Liberation Sans, sans-serif" font-weight="bold" font-size="46" stroke="#000" stroke-width="3.4" stroke-linejoin="round"><tspan x="94">y</tspan><tspan x="126">u</tspan><tspan x="159">g</tspan></text></g>
<g transform="translate(718.0 53.0) rotate(-42) scale(0.58) translate(-43.1 -31.6)"><g fill="#000" mask="url(#amHole)" ><rect x="10.2" y="0" width="69.3" height="60" rx="18" ry="18"/><rect x="10.2" y="30" width="69.3" height="25"/><rect x="0" y="47" width="89.8" height="16.3" rx="4.5"/><rect x="10.2" y="55" width="18.8" height="22.8" rx="3.5"/><rect x="57.2" y="55" width="22.3" height="22.8" rx="3.5"/></g><g transform="translate(96.6 -18) rotate(35)"><path d="M-7 -8 L7 -8 L7.5 -2 Q6 5 0 13 Q-6 5 -7.5 -2 Z"/><rect x="-7" y="-12.5" width="14" height="3.6"/></g><text y="63" font-family="Liberation Sans, sans-serif" font-weight="bold" font-size="46" stroke="#000" stroke-width="3.4" stroke-linejoin="round"><tspan x="94">y</tspan><tspan x="126">u</tspan><tspan x="159">g</tspan></text></g>
<g transform="translate(738.0 254.0) rotate(-42) scale(0.58) translate(-43.1 -31.6)"><g fill="#000" mask="url(#amHole)" ><rect x="10.2" y="0" width="69.3" height="60" rx="18" ry="18"/><rect x="10.2" y="30" width="69.3" height="25"/><rect x="0" y="47" width="89.8" height="16.3" rx="4.5"/><rect x="10.2" y="55" width="18.8" height="22.8" rx="3.5"/><rect x="57.2" y="55" width="22.3" height="22.8" rx="3.5"/></g><g transform="translate(96.6 -18) rotate(35)"><path d="M-7 -8 L7 -8 L7.5 -2 Q6 5 0 13 Q-6 5 -7.5 -2 Z"/><rect x="-7" y="-12.5" width="14" height="3.6"/></g><text y="63" font-family="Liberation Sans, sans-serif" font-weight="bold" font-size="46" stroke="#000" stroke-width="3.4" stroke-linejoin="round"><tspan x="94">y</tspan><tspan x="126">u</tspan><tspan x="159">g</tspan></text></g>
<g transform="translate(758.0 455.0) rotate(-42) scale(0.58) translate(-43.1 -31.6)"><g fill="#000" mask="url(#amHole)" ><rect x="10.2" y="0" width="69.3" height="60" rx="18" ry="18"/><rect x="10.2" y="30" width="69.3" height="25"/><rect x="0" y="47" width="89.8" height="16.3" rx="4.5"/><rect x="10.2" y="55" width="18.8" height="22.8" rx="3.5"/><rect x="57.2" y="55" width="22.3" height="22.8" rx="3.5"/></g><g transform="translate(96.6 -18) rotate(35)"><path d="M-7 -8 L7 -8 L7.5 -2 Q6 5 0 13 Q-6 5 -7.5 -2 Z"/><rect x="-7" y="-12.5" width="14" height="3.6"/></g><text y="63" font-family="Liberation Sans, sans-serif" font-weight="bold" font-size="46" stroke="#000" stroke-width="3.4" stroke-linejoin="round"><tspan x="94">y</tspan><tspan x="126">u</tspan><tspan x="159">g</tspan></text></g>
<g transform="translate(778.0 656.0) rotate(-42) scale(0.58) translate(-43.1 -31.6)"><g fill="#000" mask="url(#amHole)" ><rect x="10.2" y="0" width="69.3" height="60" rx="18" ry="18"/><rect x="10.2" y="30" width="69.3" height="25"/><rect x="0" y="47" width="89.8" height="16.3" rx="4.5"/><rect x="10.2" y="55" width="18.8" height="22.8" rx="3.5"/><rect x="57.2" y="55" width="22.3" height="22.8" rx="3.5"/></g><g transform="translate(96.6 -18) rotate(35)"><path d="M-7 -8 L7 -8 L7.5 -2 Q6 5 0 13 Q-6 5 -7.5 -2 Z"/><rect x="-7" y="-12.5" width="14" height="3.6"/></g><text y="63" font-family="Liberation Sans, sans-serif" font-weight="bold" font-size="46" stroke="#000" stroke-width="3.4" stroke-linejoin="round"><tspan x="94">y</tspan><tspan x="126">u</tspan><tspan x="159">g</tspan></text></g>
<g transform="translate(918.5 68.5) rotate(-42) scale(0.58) translate(-43.1 -31.6)"><g fill="#000" mask="url(#amHole)" ><rect x="10.2" y="0" width="69.3" height="60" rx="18" ry="18"/><rect x="10.2" y="30" width="69.3" height="25"/><rect x="0" y="47" width="89.8" height="16.3" rx="4.5"/><rect x="10.2" y="55" width="18.8" height="22.8" rx="3.5"/><rect x="57.2" y="55" width="22.3" height="22.8" rx="3.5"/></g><g transform="translate(96.6 -18) rotate(35)"><path d="M-7 -8 L7 -8 L7.5 -2 Q6 5 0 13 Q-6 5 -7.5 -2 Z"/><rect x="-7" y="-12.5" width="14" height="3.6"/></g><text y="63" font-family="Liberation Sans, sans-serif" font-weight="bold" font-size="46" stroke="#000" stroke-width="3.4" stroke-linejoin="round"><tspan x="94">y</tspan><tspan x="126">u</tspan><tspan x="159">g</tspan></text></g>
<g transform="translate(938.5 269.5) rotate(-42) scale(0.58) translate(-43.1 -31.6)"><g fill="#000" mask="url(#amHole)" ><rect x="10.2" y="0" width="69.3" height="60" rx="18" ry="18"/><rect x="10.2" y="30" width="69.3" height="25"/><rect x="0" y="47" width="89.8" height="16.3" rx="4.5"/><rect x="10.2" y="55" width="18.8" height="22.8" rx="3.5"/><rect x="57.2" y="55" width="22.3" height="22.8" rx="3.5"/></g><g transform="translate(96.6 -18) rotate(35)"><path d="M-7 -8 L7 -8 L7.5 -2 Q6 5 0 13 Q-6 5 -7.5 -2 Z"/><rect x="-7" y="-12.5" width="14" height="3.6"/></g><text y="63" font-family="Liberation Sans, sans-serif" font-weight="bold" font-size="46" stroke="#000" stroke-width="3.4" stroke-linejoin="round"><tspan x="94">y</tspan><tspan x="126">u</tspan><tspan x="159">g</tspan></text></g>
<g transform="translate(958.5 470.5) rotate(-42) scale(0.58) translate(-43.1 -31.6)"><g fill="#000" mask="url(#amHole)" ><rect x="10.2" y="0" width="69.3" height="60" rx="18" ry="18"/><rect x="10.2" y="30" width="69.3" height="25"/><rect x="0" y="47" width="89.8" height="16.3" rx="4.5"/><rect x="10.2" y="55" width="18.8" height="22.8" rx="3.5"/><rect x="57.2" y="55" width="22.3" height="22.8" rx="3.5"/></g><g transform="translate(96.6 -18) rotate(35)"><path d="M-7 -8 L7 -8 L7.5 -2 Q6 5 0 13 Q-6 5 -7.5 -2 Z"/><rect x="-7" y="-12.5" width="14" height="3.6"/></g><text y="63" font-family="Liberation Sans, sans-serif" font-weight="bold" font-size="46" stroke="#000" stroke-width="3.4" stroke-linejoin="round"><tspan x="94">y</tspan><tspan x="126">u</tspan><tspan x="159">g</tspan></text></g>
<g transform="translate(978.5 671.5) rotate(-42) scale(0.58) translate(-43.1 -31.6)"><g fill="#000" mask="url(#amHole)" ><rect x="10.2" y="0" width="69.3" height="60" rx="18" ry="18"/><rect x="10.2" y="30" width="69.3" height="25"/><rect x="0" y="47" width="89.8" height="16.3" rx="4.5"/><rect x="10.2" y="55" width="18.8" height="22.8" rx="3.5"/><rect x="57.2" y="55" width="22.3" height="22.8" rx="3.5"/></g><g transform="translate(96.6 -18) rotate(35)"><path d="M-7 -8 L7 -8 L7.5 -2 Q6 5 0 13 Q-6 5 -7.5 -2 Z"/><rect x="-7" y="-12.5" width="14" height="3.6"/></g><text y="63" font-family="Liberation Sans, sans-serif" font-weight="bold" font-size="46" stroke="#000" stroke-width="3.4" stroke-linejoin="round"><tspan x="94">y</tspan><tspan x="126">u</tspan><tspan x="159">g</tspan></text></g>
<g transform="translate(1119.0 84.0) rotate(-42) scale(0.58) translate(-43.1 -31.6)"><g fill="#000" mask="url(#amHole)" ><rect x="10.2" y="0" width="69.3" height="60" rx="18" ry="18"/><rect x="10.2" y="30" width="69.3" height="25"/><rect x="0" y="47" width="89.8" height="16.3" rx="4.5"/><rect x="10.2" y="55" width="18.8" height="22.8" rx="3.5"/><rect x="57.2" y="55" width="22.3" height="22.8" rx="3.5"/></g><g transform="translate(96.6 -18) rotate(35)"><path d="M-7 -8 L7 -8 L7.5 -2 Q6 5 0 13 Q-6 5 -7.5 -2 Z"/><rect x="-7" y="-12.5" width="14" height="3.6"/></g><text y="63" font-family="Liberation Sans, sans-serif" font-weight="bold" font-size="46" stroke="#000" stroke-width="3.4" stroke-linejoin="round"><tspan x="94">y</tspan><tspan x="126">u</tspan><tspan x="159">g</tspan></text></g>
<g transform="translate(1139.0 285.0) rotate(-42) scale(0.58) translate(-43.1 -31.6)"><g fill="#000" mask="url(#amHole)" ><rect x="10.2" y="0" width="69.3" height="60" rx="18" ry="18"/><rect x="10.2" y="30" width="69.3" height="25"/><rect x="0" y="47" width="89.8" height="16.3" rx="4.5"/><rect x="10.2" y="55" width="18.8" height="22.8" rx="3.5"/><rect x="57.2" y="55" width="22.3" height="22.8" rx="3.5"/></g><g transform="translate(96.6 -18) rotate(35)"><path d="M-7 -8 L7 -8 L7.5 -2 Q6 5 0 13 Q-6 5 -7.5 -2 Z"/><rect x="-7" y="-12.5" width="14" height="3.6"/></g><text y="63" font-family="Liberation Sans, sans-serif" font-weight="bold" font-size="46" stroke="#000" stroke-width="3.4" stroke-linejoin="round"><tspan x="94">y</tspan><tspan x="126">u</tspan><tspan x="159">g</tspan></text></g>
<g transform="translate(1159.0 486.0) rotate(-42) scale(0.58) translate(-43.1 -31.6)"><g fill="#000" mask="url(#amHole)" ><rect x="10.2" y="0" width="69.3" height="60" rx="18" ry="18"/><rect x="10.2" y="30" width="69.3" height="25"/><rect x="0" y="47" width="89.8" height="16.3" rx="4.5"/><rect x="10.2" y="55" width="18.8" height="22.8" rx="3.5"/><rect x="57.2" y="55" width="22.3" height="22.8" rx="3.5"/></g><g transform="translate(96.6 -18) rotate(35)"><path d="M-7 -8 L7 -8 L7.5 -2 Q6 5 0 13 Q-6 5 -7.5 -2 Z"/><rect x="-7" y="-12.5" width="14" height="3.6"/></g><text y="63" font-family="Liberation Sans, sans-serif" font-weight="bold" font-size="46" stroke="#000" stroke-width="3.4" stroke-linejoin="round"><tspan x="94">y</tspan><tspan x="126">u</tspan><tspan x="159">g</tspan></text></g>
<g transform="translate(1179.0 687.0) rotate(-42) scale(0.58) translate(-43.1 -31.6)"><g fill="#000" mask="url(#amHole)" ><rect x="10.2" y="0" width="69.3" height="60" rx="18" ry="18"/><rect x="10.2" y="30" width="69.3" height="25"/><rect x="0" y="47" width="89.8" height="16.3" rx="4.5"/><rect x="10.2" y="55" width="18.8" height="22.8" rx="3.5"/><rect x="57.2" y="55" width="22.3" height="22.8" rx="3.5"/></g><g transform="translate(96.6 -18) rotate(35)"><path d="M-7 -8 L7 -8 L7.5 -2 Q6 5 0 13 Q-6 5 -7.5 -2 Z"/><rect x="-7" y="-12.5" width="14" height="3.6"/></g><text y="63" font-family="Liberation Sans, sans-serif" font-weight="bold" font-size="46" stroke="#000" stroke-width="3.4" stroke-linejoin="round"><tspan x="94">y</tspan><tspan x="126">u</tspan><tspan x="159">g</tspan></text></g>
<g transform="translate(1319.5 99.5) rotate(-42) scale(0.58) translate(-43.1 -31.6)"><g fill="#000" mask="url(#amHole)" ><rect x="10.2" y="0" width="69.3" height="60" rx="18" ry="18"/><rect x="10.2" y="30" width="69.3" height="25"/><rect x="0" y="47" width="89.8" height="16.3" rx="4.5"/><rect x="10.2" y="55" width="18.8" height="22.8" rx="3.5"/><rect x="57.2" y="55" width="22.3" height="22.8" rx="3.5"/></g><g transform="translate(96.6 -18) rotate(35)"><path d="M-7 -8 L7 -8 L7.5 -2 Q6 5 0 13 Q-6 5 -7.5 -2 Z"/><rect x="-7" y="-12.5" width="14" height="3.6"/></g><text y="63" font-family="Liberation Sans, sans-serif" font-weight="bold" font-size="46" stroke="#000" stroke-width="3.4" stroke-linejoin="round"><tspan x="94">y</tspan><tspan x="126">u</tspan><tspan x="159">g</tspan></text></g>
<g transform="translate(1339.5 300.5) rotate(-42) scale(0.58) translate(-43.1 -31.6)"><g fill="#000" mask="url(#amHole)" ><rect x="10.2" y="0" width="69.3" height="60" rx="18" ry="18"/><rect x="10.2" y="30" width="69.3" height="25"/><rect x="0" y="47" width="89.8" height="16.3" rx="4.5"/><rect x="10.2" y="55" width="18.8" height="22.8" rx="3.5"/><rect x="57.2" y="55" width="22.3" height="22.8" rx="3.5"/></g><g transform="translate(96.6 -18) rotate(35)"><path d="M-7 -8 L7 -8 L7.5 -2 Q6 5 0 13 Q-6 5 -7.5 -2 Z"/><rect x="-7" y="-12.5" width="14" height="3.6"/></g><text y="63" font-family="Liberation Sans, sans-serif" font-weight="bold" font-size="46" stroke="#000" stroke-width="3.4" stroke-linejoin="round"><tspan x="94">y</tspan><tspan x="126">u</tspan><tspan x="159">g</tspan></text></g>
<g transform="translate(1359.5 501.5) rotate(-42) scale(0.58) translate(-43.1 -31.6)"><g fill="#000" mask="url(#amHole)" ><rect x="10.2" y="0" width="69.3" height="60" rx="18" ry="18"/><rect x="10.2" y="30" width="69.3" height="25"/><rect x="0" y="47" width="89.8" height="16.3" rx="4.5"/><rect x="10.2" y="55" width="18.8" height="22.8" rx="3.5"/><rect x="57.2" y="55" width="22.3" height="22.8" rx="3.5"/></g><g transform="translate(96.6 -18) rotate(35)"><path d="M-7 -8 L7 -8 L7.5 -2 Q6 5 0 13 Q-6 5 -7.5 -2 Z"/><rect x="-7" y="-12.5" width="14" height="3.6"/></g><text y="63" font-family="Liberation Sans, sans-serif" font-weight="bold" font-size="46" stroke="#000" stroke-width="3.4" stroke-linejoin="round"><tspan x="94">y</tspan><tspan x="126">u</tspan><tspan x="159">g</tspan></text></g>
<g transform="translate(1379.5 702.5) rotate(-42) scale(0.58) translate(-43.1 -31.6)"><g fill="#000" mask="url(#amHole)" ><rect x="10.2" y="0" width="69.3" height="60" rx="18" ry="18"/><rect x="10.2" y="30" width="69.3" height="25"/><rect x="0" y="47" width="89.8" height="16.3" rx="4.5"/><rect x="10.2" y="55" width="18.8" height="22.8" rx="3.5"/><rect x="57.2" y="55" width="22.3" height="22.8" rx="3.5"/></g><g transform="translate(96.6 -18) rotate(35)"><path d="M-7 -8 L7 -8 L7.5 -2 Q6 5 0 13 Q-6 5 -7.5 -2 Z"/><rect x="-7" y="-12.5" width="14" height="3.6"/></g><text y="63" font-family="Liberation Sans, sans-serif" font-weight="bold" font-size="46" stroke="#000" stroke-width="3.4" stroke-linejoin="round"><tspan x="94">y</tspan><tspan x="126">u</tspan><tspan x="159">g</tspan></text></g></g></svg>
<!-- ================= BIG LOGO OVERLAY ================= -->
<svg id="logo" role="img" aria-label="Ayug" style="left:0;top:0" width="240" height="140" viewBox="0 0 240 140">
<title>Ayug</title>
<defs>
<linearGradient id="lgA" gradientUnits="userSpaceOnUse" x1="0" y1="0" x2="0" y2="78">
  <stop offset="0" stop-color="#12b4ff"/><stop offset=".45" stop-color="#5a82ff"/><stop offset=".75" stop-color="#9455ff"/><stop offset="1" stop-color="#c93cf6"/>
</linearGradient>
<linearGradient id="lgY" gradientUnits="userSpaceOnUse" x1="0" y1="78" x2="0" y2="124">
  <stop offset="0" stop-color="#ffc417"/><stop offset=".5" stop-color="#ffa114"/><stop offset="1" stop-color="#ff7d10"/>
</linearGradient>
<linearGradient id="lgN" gradientUnits="userSpaceOnUse" x1="0" y1="-12" x2="0" y2="14">
  <stop offset="0" stop-color="#3c8cff"/><stop offset="1" stop-color="#a03cf0"/>
</linearGradient>
<filter id="glowA" x="-20%" y="-20%" width="140%" height="140%"><feGaussianBlur in="SourceAlpha" stdDeviation="1.6" result="b"/><feFlood flood-color="#f4f0ff" flood-opacity=".95"/><feComposite in2="b" operator="in" result="g"/><feMerge><feMergeNode in="g"/><feMergeNode in="g"/><feMergeNode in="SourceGraphic"/></feMerge></filter>
<filter id="glowY" x="-20%" y="-30%" width="140%" height="160%"><feGaussianBlur in="SourceAlpha" stdDeviation="1.8" result="b"/><feFlood flood-color="#ffe9a0" flood-opacity=".9"/><feComposite in2="b" operator="in" result="g"/><feMerge><feMergeNode in="g"/><feMergeNode in="g"/><feMergeNode in="SourceGraphic"/></feMerge></filter>
<filter id="soft"><feGaussianBlur stdDeviation=".5"/></filter>
<mask id="amHole" maskUnits="userSpaceOnUse" x="-10" y="-10" width="110" height="100"><rect x="-10" y="-10" width="110" height="100" fill="#fff"/><rect x="29" y="16.3" width="28.2" height="30.7" rx="3.5" fill="#000"/></mask>
</defs>
<!-- bezier handle -->
<g filter="url(#soft)">
<path d="M89.5 32.2 C100 31 106 36 106.6 43.8 L106.6 52.7 L123.7 52.7" fill="none" stroke="#8a86a8" stroke-width=".8"/>
<circle cx="89.5" cy="32.2" r="1.5" fill="#f4f0ff"/><circle cx="106.6" cy="43.8" r="1.5" fill="#e9d8ff"/><circle cx="123.7" cy="52.7" r="1.5" fill="#f4f0ff"/>
</g>
<!-- pen nib -->
<g transform="translate(118.3 28.3) rotate(33) scale(.93)" filter="url(#soft)">
<path d="M-8 -9 L8 -9 L8.5 -2 Q7 6 0 15 Q-7 6 -8.5 -2 Z" fill="url(#lgN)" stroke="#e8e0ff" stroke-opacity=".35" stroke-width=".8"/>
<rect x="-8" y="-13.5" width="16" height="4.5" fill="#ffa51e"/>
<path d="M0 14 L0 1" stroke="#f0e8ff" stroke-width=".9"/><circle cx="0" cy="0" r="1.5" fill="#f4eeff"/>
</g>
<g transform="translate(22.8 45)" filter="url(#glowA)">
<g fill="url(#lgA)" mask="url(#amHole)" ><rect x="10.2" y="0" width="69.3" height="60" rx="18" ry="18"/><rect x="10.2" y="30" width="69.3" height="25"/><rect x="0" y="47" width="89.8" height="16.3" rx="4.5"/><rect x="10.2" y="55" width="18.8" height="22.8" rx="3.5"/><rect x="57.2" y="55" width="22.3" height="22.8" rx="3.5"/></g>
</g>
<g filter="url(#glowY)">
<text y="110" font-family="Liberation Sans, sans-serif" font-weight="bold" font-size="52" fill="url(#lgY)" stroke="url(#lgY)" stroke-width="3.6" stroke-linejoin="round"><tspan x="115.4">y</tspan><tspan x="148.6">u</tspan><tspan x="185">g</tspan></text>
</g>
</svg>

<!-- ================= SITE BADGE ================= -->
<svg id="badge" role="img" aria-label="Ayug www.toonyug.com" style="left:570px;top:676px" width="220" height="42" viewBox="570 676 220 42">
<defs><linearGradient id="lgB" gradientUnits="userSpaceOnUse" x1="0" y1="0" x2="0" y2="78"><stop offset="0" stop-color="#2aa8ff"/><stop offset="1" stop-color="#b43cf0"/></linearGradient>
<filter id="bsh" x="-10%" y="-30%" width="120%" height="160%"><feGaussianBlur in="SourceAlpha" stdDeviation="1.2" result="b"/><feFlood flood-color="#000" flood-opacity=".55"/><feComposite in2="b" operator="in" result="g"/><feMerge><feMergeNode in="g"/><feMergeNode in="SourceGraphic"/></feMerge></filter>
<filter id="soft2"><feGaussianBlur stdDeviation=".4"/></filter><mask id="amHole2" maskUnits="userSpaceOnUse" x="-10" y="-10" width="110" height="100"><rect x="-10" y="-10" width="110" height="100" fill="#fff"/><rect x="29" y="16.3" width="28.2" height="30.7" rx="3.5" fill="#000"/></mask></defs>
<circle cx="590" cy="696.6" r="14.8" fill="#fcb419" filter="url(#soft2)"/>
<g transform="translate(580.4 691.8) scale(0.183)" filter="url(#soft2)"><g fill="url(#lgB)" mask="url(#amHole2)" ><rect x="10.2" y="0" width="69.3" height="60" rx="18" ry="18"/><rect x="10.2" y="30" width="69.3" height="25"/><rect x="0" y="47" width="89.8" height="16.3" rx="4.5"/><rect x="10.2" y="55" width="18.8" height="22.8" rx="3.5"/><rect x="57.2" y="55" width="22.3" height="22.8" rx="3.5"/></g></g>
<path d="M596 690.5 L597.6 686.6 L599.4 687.6 Z" fill="#8a4ae0"/>
<text x="611.8" y="703.9" font-family="Liberation Sans, sans-serif" font-weight="bold" font-size="18.8" fill="#ffffff" filter="url(#bsh)" textLength="162.5" lengthAdjust="spacingAndGlyphs">www.toonyug.com</text>
</svg>

<div class="abs" style="left:0;top:728.3px;width:1300px;height:1px;background:#1d3850"></div><div class="abs" style="left:0;top:729.2px;width:1300px;height:2px;background:#1f97e8"></div>
</div>
</body>
</html>
